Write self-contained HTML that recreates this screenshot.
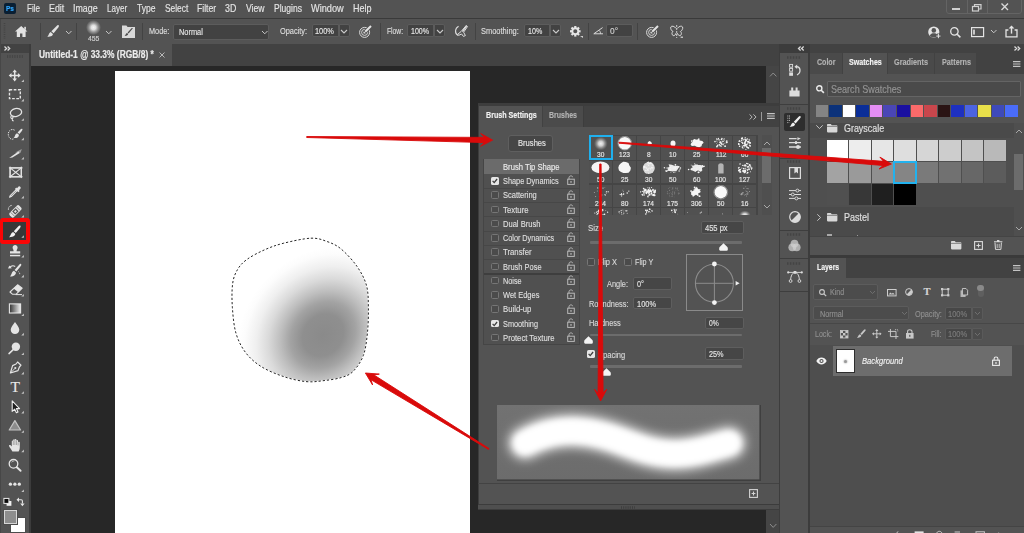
<!DOCTYPE html>
<html lang="en">
<head>
<meta charset="utf-8">
<title>Photoshop - Brush Settings</title>
<style>
html,body{margin:0;padding:0;}
body{width:1024px;height:533px;overflow:hidden;background:#535353;font-family:"Liberation Sans",sans-serif;}
#app{position:relative;width:1024px;height:533px;overflow:hidden;background:#535353;}
.r{position:absolute;box-sizing:border-box;display:block;}
.t{position:absolute;white-space:pre;transform-origin:0 0;display:block;-webkit-text-stroke:0.16px currentColor;}
svg{overflow:visible;}
</style>
</head>
<body>
<div id="app">
<!-- base layout -->
<div class="r" style="left:0px;top:0px;width:1024px;height:18px;background:#535353;"></div>
<div class="r" style="left:0px;top:18px;width:1024px;height:1px;background:#3a3a3a;"></div>
<div class="r" style="left:0px;top:19px;width:1024px;height:25px;background:#535353;"></div>
<div class="r" style="left:0px;top:44px;width:1024px;height:9px;background:#424242;"></div>
<div class="r" style="left:30px;top:44px;width:749px;height:22px;background:#424242;"></div>
<div class="r" style="left:31px;top:44px;width:141px;height:22px;background:#535353;"></div>
<div class="r" style="left:30px;top:66px;width:750px;height:467px;background:#272727;"></div>
<div class="r" style="left:115px;top:71px;width:355px;height:462px;background:#ffffff;"></div>
<div class="r" style="left:766px;top:66px;width:14px;height:467px;background:#454545;"></div>
<div class="r" style="left:0px;top:53px;width:29px;height:480px;background:#535353;"></div>
<div class="r" style="left:0px;top:19px;width:1px;height:514px;background:#474747;"></div>
<div class="r" style="left:29px;top:44px;width:2px;height:489px;background:#3c3c3c;"></div>
<div class="r" style="left:779px;top:44px;width:31px;height:489px;background:#3c3c3c;"></div>
<div class="r" style="left:780px;top:53px;width:28.2px;height:480px;background:#535353;"></div>
<div class="r" style="left:810px;top:53px;width:214px;height:480px;background:#535353;"></div>
<!-- menu bar -->
<div class="r" style="left:4px;top:3px;width:12px;height:11px;background:#0a1f33;border-radius:2px;"></div>
<span class="t" style="left:6.00px;top:4.73px;font-size:8px;line-height:8px;color:#31a8ff;transform:scaleX(0.8175);font-weight:700;">Ps</span>
<span class="t" style="left:26.50px;top:3.31px;font-size:10.5px;line-height:10.5px;color:#e4e4e4;transform:scaleX(0.7624);">File</span>
<span class="t" style="left:48.60px;top:3.31px;font-size:10.5px;line-height:10.5px;color:#e4e4e4;transform:scaleX(0.8456);">Edit</span>
<span class="t" style="left:72.90px;top:3.31px;font-size:10.5px;line-height:10.5px;color:#e4e4e4;transform:scaleX(0.8429);">Image</span>
<span class="t" style="left:106.80px;top:3.31px;font-size:10.5px;line-height:10.5px;color:#e4e4e4;transform:scaleX(0.7690);">Layer</span>
<span class="t" style="left:136.90px;top:3.31px;font-size:10.5px;line-height:10.5px;color:#e4e4e4;transform:scaleX(0.8127);">Type</span>
<span class="t" style="left:164.70px;top:3.31px;font-size:10.5px;line-height:10.5px;color:#e4e4e4;transform:scaleX(0.7984);">Select</span>
<span class="t" style="left:196.80px;top:3.31px;font-size:10.5px;line-height:10.5px;color:#e4e4e4;transform:scaleX(0.8228);">Filter</span>
<span class="t" style="left:225.00px;top:3.31px;font-size:10.5px;line-height:10.5px;color:#e4e4e4;transform:scaleX(0.8419);">3D</span>
<span class="t" style="left:245.50px;top:3.31px;font-size:10.5px;line-height:10.5px;color:#e4e4e4;transform:scaleX(0.8197);">View</span>
<span class="t" style="left:273.60px;top:3.31px;font-size:10.5px;line-height:10.5px;color:#e4e4e4;transform:scaleX(0.8101);">Plugins</span>
<span class="t" style="left:310.60px;top:3.31px;font-size:10.5px;line-height:10.5px;color:#e4e4e4;transform:scaleX(0.8756);">Window</span>
<span class="t" style="left:352.80px;top:3.31px;font-size:10.5px;line-height:10.5px;color:#e4e4e4;transform:scaleX(0.8567);">Help</span>
<div class="r" style="left:945.5px;top:-1px;width:76.4px;height:14.6px;background:#535353;border:1px solid #646464;border-radius:0 0 3px 3px;"></div>
<div class="r" style="left:966.5px;top:0px;width:1px;height:13px;background:#646464;"></div>
<div class="r" style="left:986.5px;top:0px;width:1px;height:13px;background:#646464;"></div>
<div class="r" style="left:952px;top:8px;width:7.6px;height:2.2px;background:#d0d0d0;"></div>
<svg class="r" style="left:972px;top:3.8px;" width="10" height="8" viewBox="0 0 10 8"><rect x="0.5" y="2.5" width="6" height="4.5" fill="none" stroke="#d0d0d0" stroke-width="1.2"/><path d="M2.5 2.5V0.6H9V5H6.5" fill="none" stroke="#d0d0d0" stroke-width="1.2"/></svg>
<svg class="r" style="left:1001px;top:3.2px;" width="8" height="8" viewBox="0 0 8 8"><path d="M0.5 0.5L7 7M7 0.5L0.5 7" fill="none" stroke="#d8d8d8" stroke-width="1.4"/></svg>
<!-- document tab -->
<span class="t" style="left:38.50px;top:50.03px;font-size:10px;line-height:10px;color:#ececec;transform:scaleX(0.8414);font-weight:700;">Untitled-1 @ 33.3% (RGB/8) *</span>
<svg class="r" style="left:158.5px;top:51.5px;" width="6" height="6" viewBox="0 0 6 6"><path d="M0.5 0.5L5.5 5.5M5.5 0.5L0.5 5.5" fill="none" stroke="#b8b8b8" stroke-width="1"/></svg>
<svg class="r" style="left:4px;top:46px;" width="7" height="5" viewBox="0 0 7 5"><path d="M0.5 0.5L2.6 2.5L0.5 4.5M3.6 0.5L5.7 2.5L3.6 4.5" fill="none" stroke="#dadada" stroke-width="1.3"/></svg>
<svg class="r" style="left:798px;top:46px;" width="7" height="5" viewBox="0 0 7 5"><path d="M2.6 0.5L0.5 2.5L2.6 4.5M5.7 0.5L3.6 2.5L5.7 4.5" fill="none" stroke="#dadada" stroke-width="1.3"/></svg>
<svg class="r" style="left:1013.6px;top:46.2px;" width="7" height="5" viewBox="0 0 7 5"><path d="M0.5 0.5L2.6 2.5L0.5 4.5M3.6 0.5L5.7 2.5L3.6 4.5" fill="none" stroke="#dadada" stroke-width="1.3"/></svg>
<!-- options bar -->
<svg class="r" style="left:3px;top:23px;" width="3" height="16" viewBox="0 0 3 16"><path d="M1.5 0V16" stroke="#444" stroke-width="1.6" stroke-dasharray="1 1.2"/></svg>
<svg class="r" style="left:15px;top:26px;" width="12.4" height="11" viewBox="0 0 12.4 11"><path d="M6.2 0L0 5.6H1.8V11H5V7.4H7.4V11H10.6V5.6H12.4Z" fill="#e2e2e2"/><rect x="9.3" y="0.8" width="1.6" height="3" fill="#e2e2e2"/></svg>
<div class="r" style="left:40px;top:23px;width:1px;height:16.5px;background:#434343;"></div>
<svg class="r" style="left:46.5px;top:25.2px;" width="12.0" height="12.0" viewBox="0 0 12 12"><path d="M11.6 0.2C12.2 0.8 11.9 1.6 11.3 2.4L6.6 8.2L4.4 6.2L9.6 0.9C10.3 0.2 11.1 -0.2 11.6 0.2Z" fill="#e2e2e2"/><path d="M3.7 6.9L5.9 8.9C5.9 10.4 4.6 11.7 0.3 11.8C1.8 10.6 1.5 8.0 3.7 6.9Z" fill="#e2e2e2"/></svg>
<svg class="r" style="left:65.5px;top:30.8px;" width="5.5" height="2.8" viewBox="0 0 5.5 2.8"><path d="M0 0L2.75 2.8L5.5 0" fill="none" stroke="#c8c8c8" stroke-width="1"/></svg>
<div class="r" style="left:76px;top:23px;width:1px;height:16.5px;background:#434343;"></div>
<div class="r" style="left:86px;top:19.5px;width:15px;height:15px;background:radial-gradient(circle closest-side,#f4f4f4 0%,#e0e0e0 30%,rgba(200,200,200,.55) 62%,rgba(83,83,83,0) 100%);border-radius:50%;"></div>
<span class="t" style="left:88.00px;top:34.85px;font-size:7.5px;line-height:7.5px;color:#cfcfcf;transform:scaleX(0.9110);">455</span>
<svg class="r" style="left:106px;top:31px;" width="5.5" height="2.8" viewBox="0 0 5.5 2.8"><path d="M0 0L2.75 2.8L5.5 0" fill="none" stroke="#c8c8c8" stroke-width="1"/></svg>
<svg class="r" style="left:121.5px;top:25px;" width="13" height="13" viewBox="0 0 13 13"><path d="M0 0.6H4.4L5.6 2H13V13H0Z" fill="#d9d9d9"/><path d="M10.7 3.6L6.6 8.4L5.6 7.5L9.8 3.1C10.3 2.7 11.1 3.1 10.7 3.6ZM5.1 8.1L6.1 9C6.1 10 5.2 10.9 2.6 11C3.6 10.2 3.6 8.7 5.1 8.1Z" fill="#4a4a4a"/></svg>
<div class="r" style="left:142px;top:23px;width:1px;height:16.5px;background:#434343;"></div>
<span class="t" style="left:148.70px;top:26.36px;font-size:9.5px;line-height:9.5px;color:#dcdcdc;transform:scaleX(0.7688);">Mode:</span>
<div class="r" style="left:173px;top:24px;width:96.39999999999998px;height:16px;background:#424242;border:1px solid #5c5c5c;border-radius:2px;"></div>
<span class="t" style="left:179.20px;top:26.56px;font-size:9.5px;line-height:9.5px;color:#e6e6e6;transform:scaleX(0.7774);">Normal</span>
<svg class="r" style="left:261.7px;top:31.2px;" width="5.5" height="2.8" viewBox="0 0 5.5 2.8"><path d="M0 0L2.75 2.8L5.5 0" fill="none" stroke="#c8c8c8" stroke-width="1"/></svg>
<span class="t" style="left:279.90px;top:26.16px;font-size:9.5px;line-height:9.5px;color:#dcdcdc;transform:scaleX(0.7777);">Opacity:</span>
<div class="r" style="left:311.6px;top:24px;width:27.19999999999999px;height:13px;background:#424242;border:1px solid #5c5c5c;border-radius:2px 0 0 2px;"></div>
<div class="r" style="left:338.8px;top:24px;width:11.199999999999989px;height:13px;background:#424242;border:1px solid #5c5c5c;border-radius:0 2px 2px 0;"></div>
<span class="t" style="left:315.00px;top:26.06px;font-size:9.5px;line-height:9.5px;color:#e6e6e6;transform:scaleX(0.7779);">100%</span>
<svg class="r" style="left:341.4px;top:30px;" width="6" height="3" viewBox="0 0 6 3"><path d="M0 0L3.0 3L6 0" fill="none" stroke="#cacaca" stroke-width="1.1"/></svg>
<svg class="r" style="left:359px;top:25px;" width="13" height="13" viewBox="0 0 13 13"><circle cx="5.6" cy="7.4" r="5" fill="none" stroke="#dcdcdc" stroke-width="1"/><circle cx="5.6" cy="7.4" r="3" fill="none" stroke="#dcdcdc" stroke-width="0.9"/><circle cx="5.6" cy="7.4" r="1.2" fill="#dcdcdc"/><path d="M5.8 7.2L12.2 0.8" stroke="#535353" stroke-width="3.6"/><path d="M6.2 6.8L12 1" stroke="#e4e4e4" stroke-width="2"/></svg>
<div class="r" style="left:380px;top:23px;width:1px;height:16.5px;background:#434343;"></div>
<span class="t" style="left:387.00px;top:26.16px;font-size:9.5px;line-height:9.5px;color:#dcdcdc;transform:scaleX(0.7093);">Flow:</span>
<div class="r" style="left:407px;top:24px;width:26.80000000000001px;height:13px;background:#424242;border:1px solid #5c5c5c;border-radius:2px 0 0 2px;"></div>
<div class="r" style="left:433.8px;top:24px;width:11.599999999999966px;height:13px;background:#424242;border:1px solid #5c5c5c;border-radius:0 2px 2px 0;"></div>
<span class="t" style="left:410.70px;top:26.06px;font-size:9.5px;line-height:9.5px;color:#e6e6e6;transform:scaleX(0.7449);">100%</span>
<svg class="r" style="left:436.6px;top:30px;" width="6" height="3" viewBox="0 0 6 3"><path d="M0 0L3.0 3L6 0" fill="none" stroke="#cacaca" stroke-width="1.1"/></svg>
<svg class="r" style="left:454px;top:25px;" width="14" height="13" viewBox="0 0 14 13"><path d="M4.6 1.2C1 3 0.2 8.6 4.2 10.6" fill="none" stroke="#dcdcdc" stroke-width="1.1"/><path d="M12.3 0.4L13.5 1.6L9.6 7.2L11.4 10.6L9.4 11.4L7.6 9L4.6 10.4L3.8 9.2L7 6.6Z" fill="none" stroke="#dcdcdc" stroke-width="1"/><path d="M12.6 0.9L8.4 6.6" stroke="#dcdcdc" stroke-width="1.5"/></svg>
<div class="r" style="left:475px;top:23px;width:1px;height:16.5px;background:#434343;"></div>
<span class="t" style="left:481.40px;top:26.16px;font-size:9.5px;line-height:9.5px;color:#dcdcdc;transform:scaleX(0.7865);">Smoothing:</span>
<div class="r" style="left:524px;top:24px;width:26.399999999999977px;height:13px;background:#424242;border:1px solid #5c5c5c;border-radius:2px 0 0 2px;"></div>
<div class="r" style="left:550.4px;top:24px;width:11.0px;height:13px;background:#424242;border:1px solid #5c5c5c;border-radius:0 2px 2px 0;"></div>
<span class="t" style="left:527.60px;top:26.06px;font-size:9.5px;line-height:9.5px;color:#e6e6e6;transform:scaleX(0.7468);">10%</span>
<svg class="r" style="left:552.9px;top:30px;" width="6" height="3" viewBox="0 0 6 3"><path d="M0 0L3.0 3L6 0" fill="none" stroke="#cacaca" stroke-width="1.1"/></svg>
<svg class="r" style="left:570px;top:26px;" width="10.6" height="10.6" viewBox="0 0 10.6 10.6"><g transform="translate(5.3 5.3)"><rect x="-1.1" y="-5.3" width="2.2" height="2.6" fill="#e6e6e6" transform="rotate(0)"/><rect x="-1.1" y="-5.3" width="2.2" height="2.6" fill="#e6e6e6" transform="rotate(45)"/><rect x="-1.1" y="-5.3" width="2.2" height="2.6" fill="#e6e6e6" transform="rotate(90)"/><rect x="-1.1" y="-5.3" width="2.2" height="2.6" fill="#e6e6e6" transform="rotate(135)"/><rect x="-1.1" y="-5.3" width="2.2" height="2.6" fill="#e6e6e6" transform="rotate(180)"/><rect x="-1.1" y="-5.3" width="2.2" height="2.6" fill="#e6e6e6" transform="rotate(225)"/><rect x="-1.1" y="-5.3" width="2.2" height="2.6" fill="#e6e6e6" transform="rotate(270)"/><rect x="-1.1" y="-5.3" width="2.2" height="2.6" fill="#e6e6e6" transform="rotate(315)"/><circle r="3" fill="none" stroke="#e6e6e6" stroke-width="1.9"/></g></svg>
<svg class="r" style="left:579.5px;top:36.3px;" width="3" height="2" viewBox="0 0 3 2"><path d="M0 0H3L3 2Z" fill="#d0d0d0"/></svg>
<div class="r" style="left:588px;top:23px;width:1px;height:16.5px;background:#434343;"></div>
<svg class="r" style="left:593.2px;top:26.8px;" width="10.4" height="7.4" viewBox="0 0 10.4 7.4"><path d="M9.6 0.6L0.8 6.8H10" fill="none" stroke="#d8d8d8" stroke-width="1"/><path d="M6.2 3.4C7.2 4.4 7.6 5.6 7.5 6.8" fill="none" stroke="#d8d8d8" stroke-width="0.9"/></svg>
<div class="r" style="left:606px;top:24px;width:27px;height:13px;background:#424242;border:1px solid #5c5c5c;border-radius:2px;"></div>
<span class="t" style="left:610.00px;top:26.06px;font-size:9.5px;line-height:9.5px;color:#d2d2d2;transform:scaleX(0.8808);">0°</span>
<div class="r" style="left:637px;top:23px;width:1px;height:16.5px;background:#434343;"></div>
<svg class="r" style="left:645.5px;top:25px;" width="13" height="13" viewBox="0 0 13 13"><circle cx="5.6" cy="7.4" r="5" fill="none" stroke="#dcdcdc" stroke-width="1"/><circle cx="5.6" cy="7.4" r="3" fill="none" stroke="#dcdcdc" stroke-width="0.9"/><circle cx="5.6" cy="7.4" r="1.2" fill="#dcdcdc"/><path d="M5.8 7.2L12.2 0.8" stroke="#535353" stroke-width="3.6"/><path d="M6.2 6.8L12 1" stroke="#e4e4e4" stroke-width="2"/></svg>
<svg class="r" style="left:670px;top:25px;" width="13.4" height="13.4" viewBox="0 0 13.4 13.4"><path d="M6 3.4C4.6 1 1.4 0.6 0.8 2C0.2 3.6 1.6 6 3 6.6C1.6 7.4 1.6 10 3.2 10.6C4.6 11 5.8 9.4 6 8.2" fill="none" stroke="#dadada" stroke-width="1"/><path d="M7.4 3.4C8.8 1 12 0.6 12.6 2C13.2 3.6 11.8 6 10.4 6.6C11.8 7.4 11.8 10 10.2 10.6C8.8 11 7.6 9.4 7.4 8.2" fill="none" stroke="#dadada" stroke-width="1"/><path d="M6.7 0V13" stroke="#dadada" stroke-width="0.9" stroke-dasharray="2 1"/><rect x="10.6" y="11.6" width="2.4" height="1.2" fill="#dadada"/></svg>
<svg class="r" style="left:928px;top:25.6px;" width="13" height="12.4" viewBox="0 0 13 12.4"><circle cx="5.8" cy="6" r="5.6" fill="#e4e4e4"/><circle cx="5.8" cy="4.4" r="2.3" fill="#535353"/><path d="M1.8 10C2.4 7.6 4 7.2 5.8 7.2C7.6 7.2 9.2 7.6 9.8 10C8 11.8 3.6 11.8 1.8 10Z" fill="#535353"/><path d="M10.4 7.6V12.4M8 10H12.8" stroke="#535353" stroke-width="2.6"/><path d="M10.4 8V12.2M8.3 10.1H12.5" stroke="#e4e4e4" stroke-width="1"/></svg>
<svg class="r" style="left:950px;top:26.5px;" width="11" height="11" viewBox="0 0 11 11"><circle cx="4.4" cy="4.4" r="3.7" fill="none" stroke="#e4e4e4" stroke-width="1.3"/><path d="M7.2 7.2L10.4 10.4" stroke="#e4e4e4" stroke-width="1.5"/></svg>
<svg class="r" style="left:970.7px;top:26.7px;" width="13.2" height="10.2" viewBox="0 0 13.2 10.2"><rect x="0.6" y="0.6" width="12" height="9" fill="none" stroke="#e4e4e4" stroke-width="1.2"/><rect x="2.2" y="2.6" width="1.6" height="5" fill="#e4e4e4"/></svg>
<svg class="r" style="left:990.8px;top:30px;" width="5.5" height="2.8" viewBox="0 0 5.5 2.8"><path d="M0 0L2.75 2.8L5.5 0" fill="none" stroke="#c8c8c8" stroke-width="1"/></svg>
<svg class="r" style="left:1005px;top:25px;" width="13" height="12.4" viewBox="0 0 13 12.4"><path d="M3.4 5H1V11.8H12V5H9.6" fill="none" stroke="#e4e4e4" stroke-width="1.3"/><path d="M6.5 8.6V1.6" stroke="#e4e4e4" stroke-width="1.4"/><path d="M3.6 3.4L6.5 0.4L9.4 3.4Z" fill="#e4e4e4"/></svg>
<!-- left toolbar -->
<svg class="r" style="left:6.8px;top:55.4px;" width="16" height="3" viewBox="0 0 16 3"><path d="M0 1.5H16" stroke="#464646" stroke-width="2.8" stroke-dasharray="1.2 1.25"/></svg>
<div class="r" style="left:0px;top:217.6px;width:30.3px;height:26.7px;background:#383838;border:4.1px solid #fb0505;border-left-width:3.9px;border-radius:3px;"></div>
<svg class="r" style="left:0;top:0" width="32" height="533" viewBox="0 0 32 533"><defs><linearGradient id="tg" x1="0" x2="1" y1="0" y2="0"><stop offset="0" stop-color="#303030"/><stop offset="1" stop-color="#f0f0f0"/></linearGradient></defs><path d="M14.7 71V80M10.2 75.4H19.2" stroke="#e4e4e4" stroke-width="1.5"/><path d="M14.7 69.4L17 72.2H12.4ZM14.7 81.4L12.4 78.6H17ZM8.7 75.4L11.5 73.1V77.7ZM20.7 75.4L17.9 77.7V73.1Z" fill="#e4e4e4"/><path d="M23.9 79.4V82.0H21.3Z" fill="#c6c6c6"/><rect x="9.5" y="89.7" width="10.8" height="8.9" fill="none" stroke="#e4e4e4" stroke-width="1.4" stroke-dasharray="2.7 1.5"/><path d="M23.9 98.8V101.4H21.3Z" fill="#c6c6c6"/><ellipse cx="16" cy="112.5" rx="5.7" ry="4" fill="none" stroke="#e4e4e4" stroke-width="1.3" transform="rotate(-12 16 112.5)"/><path d="M11.4 116C10.4 117 10.8 118.6 12 118.6C13.2 118.6 13.4 117 12.2 116.8M12 118.6C12 119.8 12.6 120.8 13.6 121" fill="none" stroke="#e4e4e4" stroke-width="1.1"/><path d="M23.9 118.2V120.8H21.3Z" fill="#c6c6c6"/><path d="M14.6 130.2C11 128 7.6 131.4 8.4 135.4C9.2 139.2 12.4 140 14 138.6" fill="none" stroke="#e4e4e4" stroke-width="1" stroke-dasharray="1.3 1"/><path d="M22.2 128.8C22.8 129.4 22.4 130.2 21.8 131L19.4 134L17.6 132.6L20.4 129.4C21 128.8 21.7 128.4 22.2 128.8Z" fill="#e4e4e4"/><path d="M17 133.2L18.9 134.7C19.2 136.8 17 138.6 13.6 138C15.2 136.8 14.8 134 17 133.2Z" fill="#e4e4e4"/><path d="M23.9 137.6V140.2H21.3Z" fill="#c6c6c6"/><path d="M15.2 152.4L21.8 149L20.6 152.8Z" fill="#9c9c9c"/><path d="M9.2 158L18.4 151.4L19.8 153L12.4 157.6Z" fill="#e4e4e4"/><path d="M23.9 157.0V159.6H21.3Z" fill="#c6c6c6"/><rect x="10.1" y="167.9" width="11.2" height="8.9" fill="none" stroke="#e4e4e4" stroke-width="1.3"/><path d="M10.1 167.9L21.3 176.8M21.3 167.9L10.1 176.8" stroke="#e4e4e4" stroke-width="1.1"/><path d="M8.9 167.9H22.6M8.9 176.8H22.6M10.1 166.6V178.1M21.3 166.6V178.1" stroke="#e4e4e4" stroke-width="1"/><path d="M18.6 186.6C19.6 185.8 21.2 187.2 20.6 188.4L19 190.2L19.7 190.9L18.3 192.3L14.9 188.9L16.3 187.5L17 188.2Z" fill="#e4e4e4"/><path d="M15.7 190.2L10.2 195.6L9.6 197.2L11.2 196.6L16.7 191.2Z" fill="none" stroke="#e4e4e4" stroke-width="1.1" stroke-linejoin="round"/><path d="M23.9 195.8V198.4H21.3Z" fill="#c6c6c6"/><path d="M11.6 205.4C9 205.8 7.8 208.2 8.6 210.8" fill="none" stroke="#e4e4e4" stroke-width="1" stroke-dasharray="1.3 1"/><g transform="rotate(-45 15.4 211.4)"><rect x="8.6" y="208.4" width="13.6" height="6" rx="1.8" fill="#e4e4e4"/><rect x="13" y="209.3" width="4.8" height="4.2" fill="#535353"/><rect x="14.3" y="210.4" width="2.2" height="2" fill="#e4e4e4"/><path d="M11.4 208.6V214.2M19.4 208.6V214.2" stroke="#535353" stroke-width="0.6"/></g><path d="M23.9 215.0V217.6H21.3Z" fill="#c6c6c6"/><path d="M20.2 225.6C20.9 226.2 20.6 227.1 20 227.9L15.8 233L13.8 231.3L18.4 226.3C19 225.6 19.7 225.2 20.2 225.6Z" fill="#f2f2f2"/><path d="M13.1 232L15.2 233.8C15.3 235.6 13.6 237.3 9 237.2C10.8 236 10.6 233 13.1 232Z" fill="#f2f2f2"/><path d="M23.9 235.2V237.8H21.3Z" fill="#bdbdbd"/><path d="M12.6 247.6C12.6 244.2 17.6 244.2 17.6 247.6C17.6 249 16.6 249.6 16.6 251.2H20.2V253.6H10V251.2H13.6C13.6 249.6 12.6 249 12.6 247.6Z" fill="#e4e4e4"/><rect x="10" y="254.8" width="10.2" height="1.5" fill="#e4e4e4"/><path d="M23.9 255.0V257.6H21.3Z" fill="#c6c6c6"/><path d="M21 263.9C21.6 264.5 21.3 265.3 20.8 266L16.4 271.6L14.6 270.1L19.4 264.6C19.9 264 20.5 263.5 21 263.9Z" fill="#e4e4e4"/><path d="M14 270.8L15.9 272.4C16 274.2 14.4 276.4 10 276.4C11.8 275 11.4 271.8 14 270.8Z" fill="#e4e4e4"/><path d="M9.6 267.6C11 265.8 13.6 265.6 15.2 266.4" fill="none" stroke="#e4e4e4" stroke-width="1.1"/><path d="M8 268.6L9.4 265.4L11.8 268.2Z" fill="#e4e4e4"/><path d="M18.4 271.6C19.8 272.4 20 273.8 19.4 275" fill="none" stroke="#e4e4e4" stroke-width="0.9" stroke-dasharray="1 1"/><path d="M23.9 274.8V277.4H21.3Z" fill="#c6c6c6"/><path d="M17.6 284.8L22.2 288.2L16.2 294.2H12.4L10 292Z" fill="none" stroke="#e4e4e4" stroke-width="1.1" stroke-linejoin="round"/><path d="M17.6 284.8L22.2 288.2L18.2 292.2L13.6 288.6Z" fill="#e4e4e4"/><path d="M15.6 294.6H22" stroke="#e4e4e4" stroke-width="1"/><path d="M23.9 294.0V296.6H21.3Z" fill="#c6c6c6"/><rect x="9.4" y="303.9" width="11.2" height="9.1" fill="url(#tg)" stroke="#e6e6e6" stroke-width="1.1"/><path d="M23.9 313.4V316.0H21.3Z" fill="#c6c6c6"/><path d="M15 322C16.8 325 19.3 327.2 19.3 329.8C19.3 335.4 10.7 335.4 10.7 329.8C10.7 327.2 13.2 325 15 322Z" fill="#e4e4e4"/><path d="M23.9 332.8V335.4H21.3Z" fill="#c6c6c6"/><circle cx="15.9" cy="346.8" r="4.2" fill="#e4e4e4"/><path d="M13.2 349.6L9 353.6" stroke="#e4e4e4" stroke-width="1.5" stroke-linecap="round"/><path d="M23.9 352.4V355.0H21.3Z" fill="#c6c6c6"/><path d="M17.6 362L21 365.2L19.4 367L18 370.6L10.4 373L12.6 365.6L16 364Z" fill="none" stroke="#e4e4e4" stroke-width="1.2" stroke-linejoin="round"/><path d="M10.8 372.6L14.8 368.6" stroke="#e4e4e4" stroke-width="0.9"/><circle cx="15.3" cy="368" r="1.1" fill="#e4e4e4"/><path d="M23.9 371.8V374.4H21.3Z" fill="#c6c6c6"/><path d="M23.9 391.2V393.8H21.3Z" fill="#c6c6c6"/><path d="M12.2 400.8V411.4L14.7 409.2L16.4 412.8L18 412L16.4 408.6H19.6Z" fill="#1e1e1e" stroke="#ececec" stroke-width="1.1" stroke-linejoin="round"/><path d="M23.9 410.8V413.4H21.3Z" fill="#c6c6c6"/><path d="M14.9 420.6L20.6 430H9.2Z" fill="#8c8c8c" stroke="#c4c4c4" stroke-width="1.2" stroke-linejoin="round"/><path d="M23.9 430.2V432.8H21.3Z" fill="#c6c6c6"/><path d="M12.4 451.4C11.4 449.6 9.6 447.6 9 446C8.8 445 10 444.6 10.8 445.4L11.8 446.6V441.2C11.8 440.2 13.2 440.2 13.2 441.2V440C13.2 439 14.8 439 14.8 440V439.8C14.8 438.8 16.4 438.8 16.4 439.8V440.6C16.4 439.8 18 439.8 18 440.8V442.4C18.2 441.6 19.8 441.6 19.8 442.8V447C19.8 448.8 19.4 450.2 18.6 451.4Z" fill="#e4e4e4"/><path d="M13.3 441V445M14.9 440V445M16.5 440.6V445M18.1 442.4V445.4" stroke="#606060" stroke-width="0.45"/><path d="M23.9 449.6V452.2H21.3Z" fill="#c6c6c6"/><circle cx="13.5" cy="463.8" r="4.3" fill="none" stroke="#e4e4e4" stroke-width="1.3"/><path d="M16.8 467.2L20.6 470.8" stroke="#e4e4e4" stroke-width="1.9" stroke-linecap="round"/><path d="M11.4 462.4C12 461.4 13.2 461 14.2 461.2" fill="none" stroke="#e4e4e4" stroke-width="0.7"/><circle cx="10.4" cy="484.2" r="1.65" fill="#e4e4e4"/><circle cx="14.9" cy="484.2" r="1.65" fill="#e4e4e4"/><circle cx="19.3" cy="484.2" r="1.65" fill="#e4e4e4"/><path d="M23.9 489.4V492.0H21.3Z" fill="#c6c6c6"/><rect x="6.6" y="501" width="4.8" height="4.8" fill="#f0f0f0"/><rect x="3.9" y="498.4" width="5" height="5" fill="#0c0c0c" stroke="#ececec" stroke-width="1"/><path d="M18.6 499.8H21.2C22 499.8 22.4 500.2 22.4 501V503.6" fill="none" stroke="#e6e6e6" stroke-width="1.1"/><path d="M16.5 499.8L19 497.6V502ZM22.4 506.2L20.2 503.6H24.6Z" fill="#e6e6e6"/></svg>
<span class="t" style="left:10.6px;top:378.6px;font:400 15.5px/16px 'Liberation Serif',serif;color:#e8e8e8;">T</span>
<div class="r" style="left:11px;top:517.5px;width:14.4px;height:14.2px;background:#ffffff;box-shadow:0 0 0 1px #4c4c4c;"></div>
<div class="r" style="left:3.7px;top:510.1px;width:13.4px;height:14.1px;background:#8d8d8d;border:1px solid #d6d6d6;box-shadow:0 0 0 1px #4c4c4c;"></div>
<!-- canvas artwork: soft brush dab inside a lasso selection -->
<svg class="r" style="left:115px;top:71px" width="355" height="462" viewBox="115 71 355 462">
<defs>
<clipPath id="sel"><path d="M310.8 238.2C318.0 237.9 322.0 239.7 327.0 241.5C332.0 243.3 336.0 244.8 341.0 248.9C346.0 253.1 352.8 260.3 357.0 266.4C361.2 272.5 364.6 278.6 366.5 285.5C368.4 292.4 368.2 299.8 368.4 307.8C368.5 315.8 368.2 325.3 367.4 333.3C366.5 341.3 365.7 349.2 363.3 355.6C360.9 362.0 356.7 367.8 353.0 371.5C349.3 375.2 345.8 376.1 341.0 377.6C336.2 379.1 329.8 379.9 324.0 380.6C318.2 381.3 312.7 382.3 306.0 381.6C299.3 380.9 291.1 379.1 283.7 376.6C276.3 374.1 267.8 370.7 261.4 366.7C255.0 362.7 249.7 358.0 245.5 352.4C241.3 346.8 238.2 340.7 236.0 333.3C233.8 325.9 233.0 316.0 232.4 307.8C231.8 299.6 231.8 290.4 232.6 284.0C233.4 277.6 235.1 273.7 237.5 269.6C239.9 265.5 242.5 262.7 247.0 259.4C251.5 256.1 258.5 252.5 264.6 249.8C270.7 247.1 276.0 245.1 283.7 243.2C291.4 241.3 303.6 238.5 310.8 238.2Z"/></clipPath>
<radialGradient id="dab" cx="0.5" cy="0.5" r="0.5"><stop offset="0" stop-color="#8a8a8a"/><stop offset="0.24" stop-color="#8f8f8f"/><stop offset="0.38" stop-color="#a3a3a3"/><stop offset="0.5" stop-color="#bebebe"/><stop offset="0.64" stop-color="#dadada"/><stop offset="0.78" stop-color="#efefef"/><stop offset="0.92" stop-color="#fcfcfc"/><stop offset="1" stop-color="#ffffff"/></radialGradient>
</defs>
<g clip-path="url(#sel)"><ellipse cx="323" cy="335" rx="80" ry="93" fill="url(#dab)" transform="rotate(40 323 335)"/></g>
<path d="M310.8 238.2C318.0 237.9 322.0 239.7 327.0 241.5C332.0 243.3 336.0 244.8 341.0 248.9C346.0 253.1 352.8 260.3 357.0 266.4C361.2 272.5 364.6 278.6 366.5 285.5C368.4 292.4 368.2 299.8 368.4 307.8C368.5 315.8 368.2 325.3 367.4 333.3C366.5 341.3 365.7 349.2 363.3 355.6C360.9 362.0 356.7 367.8 353.0 371.5C349.3 375.2 345.8 376.1 341.0 377.6C336.2 379.1 329.8 379.9 324.0 380.6C318.2 381.3 312.7 382.3 306.0 381.6C299.3 380.9 291.1 379.1 283.7 376.6C276.3 374.1 267.8 370.7 261.4 366.7C255.0 362.7 249.7 358.0 245.5 352.4C241.3 346.8 238.2 340.7 236.0 333.3C233.8 325.9 233.0 316.0 232.4 307.8C231.8 299.6 231.8 290.4 232.6 284.0C233.4 277.6 235.1 273.7 237.5 269.6C239.9 265.5 242.5 262.7 247.0 259.4C251.5 256.1 258.5 252.5 264.6 249.8C270.7 247.1 276.0 245.1 283.7 243.2C291.4 241.3 303.6 238.5 310.8 238.2Z" fill="none" stroke="#ffffff" stroke-width="1"/>
<path d="M310.8 238.2C318.0 237.9 322.0 239.7 327.0 241.5C332.0 243.3 336.0 244.8 341.0 248.9C346.0 253.1 352.8 260.3 357.0 266.4C361.2 272.5 364.6 278.6 366.5 285.5C368.4 292.4 368.2 299.8 368.4 307.8C368.5 315.8 368.2 325.3 367.4 333.3C366.5 341.3 365.7 349.2 363.3 355.6C360.9 362.0 356.7 367.8 353.0 371.5C349.3 375.2 345.8 376.1 341.0 377.6C336.2 379.1 329.8 379.9 324.0 380.6C318.2 381.3 312.7 382.3 306.0 381.6C299.3 380.9 291.1 379.1 283.7 376.6C276.3 374.1 267.8 370.7 261.4 366.7C255.0 362.7 249.7 358.0 245.5 352.4C241.3 346.8 238.2 340.7 236.0 333.3C233.8 325.9 233.0 316.0 232.4 307.8C231.8 299.6 231.8 290.4 232.6 284.0C233.4 277.6 235.1 273.7 237.5 269.6C239.9 265.5 242.5 262.7 247.0 259.4C251.5 256.1 258.5 252.5 264.6 249.8C270.7 247.1 276.0 245.1 283.7 243.2C291.4 241.3 303.6 238.5 310.8 238.2Z" fill="none" stroke="#262626" stroke-width="1" stroke-dasharray="2.2 2"/>
</svg>
<!-- brush settings panel -->
<div class="r" style="left:478px;top:103px;width:302px;height:407px;background:#3d3d3d;"></div>
<div class="r" style="left:479px;top:106px;width:300px;height:21px;background:#424242;"></div>
<div class="r" style="left:479px;top:127px;width:300px;height:377px;background:#535353;"></div>
<div class="r" style="left:479px;top:106px;width:63.4px;height:22px;background:#535353;"></div>
<div class="r" style="left:543px;top:106px;width:40px;height:20.5px;background:#4b4b4b;"></div>
<div class="r" style="left:583px;top:106px;width:1px;height:20.5px;background:#3d3d3d;"></div>
<span class="t" style="left:485.60px;top:109.86px;font-size:9.5px;line-height:9.5px;color:#f2f2f2;transform:scaleX(0.7504);font-weight:700;">Brush Settings</span>
<span class="t" style="left:549.00px;top:109.86px;font-size:9.5px;line-height:9.5px;color:#b4b4b4;transform:scaleX(0.7366);font-weight:700;">Brushes</span>
<svg class="r" style="left:749px;top:113.5px;" width="8" height="6" viewBox="0 0 8 6"><path d="M0.5 0.4L3.2 3L0.5 5.6M4.4 0.4L7.1 3L4.4 5.6" fill="none" stroke="#b8b8b8" stroke-width="1"/></svg>
<div class="r" style="left:761px;top:112px;width:1px;height:9px;background:#9a9a9a;"></div>
<svg class="r" style="left:767.2px;top:113px;" width="7.8" height="6" viewBox="0 0 7.8 6"><path d="M0 0.7H7.8M0 3H7.8M0 5.3H7.8" stroke="#c4c4c4" stroke-width="1.2"/></svg>
<div class="r" style="left:508.4px;top:134.5px;width:44.8px;height:17px;background:#464646;border:1px solid #5f5f5f;border-radius:3px;"></div>
<span class="t" style="left:517.50px;top:138.46px;font-size:9.5px;line-height:9.5px;color:#e4e4e4;transform:scaleX(0.8005);">Brushes</span>
<div class="r" style="left:483px;top:158.6px;width:96.6px;height:186px;background:#505050;border:1px solid #454545;"></div>
<div class="r" style="left:484px;top:159.2px;width:95px;height:14.4px;background:#6b6b6b;"></div>
<span class="t" style="left:503.40px;top:161.56px;font-size:9.5px;line-height:9.5px;color:#eaeaea;transform:scaleX(0.8058);">Brush Tip Shape</span>
<div class="r" style="left:491.2px;top:177.0px;width:7.6px;height:7.6px;background:#e6e6e6;border-radius:1.6px;"></div>
<svg class="r" style="left:491.2px;top:177.0px;" width="7.6" height="7.6" viewBox="0 0 7.6 7.6"><path d="M1.6 3.9L3.2 5.6L6.1 2" fill="none" stroke="#3c3c3c" stroke-width="1.3"/></svg>
<span class="t" style="left:502.60px;top:176.06px;font-size:9.5px;line-height:9.5px;color:#dedede;transform:scaleX(0.7742);">Shape Dynamics</span>
<svg class="r" style="left:566.8px;top:175.4px;" width="8" height="10" viewBox="0 0 8 10"><rect x="0.7" y="4.2" width="6.6" height="5.2" fill="none" stroke="#b8b8b8" stroke-width="1"/><path d="M2 4.2V2.6C2 0.4 5.6 0.4 5.6 2.2" fill="none" stroke="#b8b8b8" stroke-width="1"/><rect x="3.4" y="6" width="1.2" height="1.8" fill="#b8b8b8"/></svg>
<div class="r" style="left:484px;top:187.75px;width:95px;height:1px;background:#474747;"></div>
<div class="r" style="left:491.2px;top:191.25px;width:7.6px;height:7.6px;background:#4b4b4b;border:1px solid #767676;border-radius:1.6px;"></div>
<span class="t" style="left:502.60px;top:190.31px;font-size:9.5px;line-height:9.5px;color:#dedede;transform:scaleX(0.7902);">Scattering</span>
<svg class="r" style="left:566.8px;top:189.65px;" width="8" height="10" viewBox="0 0 8 10"><rect x="0.7" y="4.2" width="6.6" height="5.2" fill="none" stroke="#b8b8b8" stroke-width="1"/><path d="M2 4.2V2.6C2 0.4 5.6 0.4 5.6 2.2" fill="none" stroke="#b8b8b8" stroke-width="1"/><rect x="3.4" y="6" width="1.2" height="1.8" fill="#b8b8b8"/></svg>
<div class="r" style="left:484px;top:202.0px;width:95px;height:1px;background:#474747;"></div>
<div class="r" style="left:491.2px;top:205.5px;width:7.6px;height:7.6px;background:#4b4b4b;border:1px solid #767676;border-radius:1.6px;"></div>
<span class="t" style="left:502.60px;top:204.56px;font-size:9.5px;line-height:9.5px;color:#dedede;transform:scaleX(0.8217);">Texture</span>
<svg class="r" style="left:566.8px;top:203.9px;" width="8" height="10" viewBox="0 0 8 10"><rect x="0.7" y="4.2" width="6.6" height="5.2" fill="none" stroke="#b8b8b8" stroke-width="1"/><path d="M2 4.2V2.6C2 0.4 5.6 0.4 5.6 2.2" fill="none" stroke="#b8b8b8" stroke-width="1"/><rect x="3.4" y="6" width="1.2" height="1.8" fill="#b8b8b8"/></svg>
<div class="r" style="left:484px;top:216.25px;width:95px;height:1px;background:#474747;"></div>
<div class="r" style="left:491.2px;top:219.75px;width:7.6px;height:7.6px;background:#4b4b4b;border:1px solid #767676;border-radius:1.6px;"></div>
<span class="t" style="left:502.60px;top:218.81px;font-size:9.5px;line-height:9.5px;color:#dedede;transform:scaleX(0.7958);">Dual Brush</span>
<svg class="r" style="left:566.8px;top:218.15px;" width="8" height="10" viewBox="0 0 8 10"><rect x="0.7" y="4.2" width="6.6" height="5.2" fill="none" stroke="#b8b8b8" stroke-width="1"/><path d="M2 4.2V2.6C2 0.4 5.6 0.4 5.6 2.2" fill="none" stroke="#b8b8b8" stroke-width="1"/><rect x="3.4" y="6" width="1.2" height="1.8" fill="#b8b8b8"/></svg>
<div class="r" style="left:484px;top:230.5px;width:95px;height:1px;background:#474747;"></div>
<div class="r" style="left:491.2px;top:234.0px;width:7.6px;height:7.6px;background:#4b4b4b;border:1px solid #767676;border-radius:1.6px;"></div>
<span class="t" style="left:502.60px;top:233.06px;font-size:9.5px;line-height:9.5px;color:#dedede;transform:scaleX(0.7637);">Color Dynamics</span>
<svg class="r" style="left:566.8px;top:232.4px;" width="8" height="10" viewBox="0 0 8 10"><rect x="0.7" y="4.2" width="6.6" height="5.2" fill="none" stroke="#b8b8b8" stroke-width="1"/><path d="M2 4.2V2.6C2 0.4 5.6 0.4 5.6 2.2" fill="none" stroke="#b8b8b8" stroke-width="1"/><rect x="3.4" y="6" width="1.2" height="1.8" fill="#b8b8b8"/></svg>
<div class="r" style="left:484px;top:244.75px;width:95px;height:1px;background:#474747;"></div>
<div class="r" style="left:491.2px;top:248.25px;width:7.6px;height:7.6px;background:#4b4b4b;border:1px solid #767676;border-radius:1.6px;"></div>
<span class="t" style="left:502.60px;top:247.31px;font-size:9.5px;line-height:9.5px;color:#dedede;transform:scaleX(0.8167);">Transfer</span>
<svg class="r" style="left:566.8px;top:246.65px;" width="8" height="10" viewBox="0 0 8 10"><rect x="0.7" y="4.2" width="6.6" height="5.2" fill="none" stroke="#b8b8b8" stroke-width="1"/><path d="M2 4.2V2.6C2 0.4 5.6 0.4 5.6 2.2" fill="none" stroke="#b8b8b8" stroke-width="1"/><rect x="3.4" y="6" width="1.2" height="1.8" fill="#b8b8b8"/></svg>
<div class="r" style="left:484px;top:259.0px;width:95px;height:1px;background:#474747;"></div>
<div class="r" style="left:491.2px;top:262.5px;width:7.6px;height:7.6px;background:#4b4b4b;border:1px solid #767676;border-radius:1.6px;"></div>
<span class="t" style="left:502.60px;top:261.56px;font-size:9.5px;line-height:9.5px;color:#dedede;transform:scaleX(0.7860);">Brush Pose</span>
<svg class="r" style="left:566.8px;top:260.90000000000003px;" width="8" height="10" viewBox="0 0 8 10"><rect x="0.7" y="4.2" width="6.6" height="5.2" fill="none" stroke="#b8b8b8" stroke-width="1"/><path d="M2 4.2V2.6C2 0.4 5.6 0.4 5.6 2.2" fill="none" stroke="#b8b8b8" stroke-width="1"/><rect x="3.4" y="6" width="1.2" height="1.8" fill="#b8b8b8"/></svg>
<div class="r" style="left:491.2px;top:276.75px;width:7.6px;height:7.6px;background:#4b4b4b;border:1px solid #767676;border-radius:1.6px;"></div>
<span class="t" style="left:502.60px;top:275.81px;font-size:9.5px;line-height:9.5px;color:#dedede;transform:scaleX(0.7658);">Noise</span>
<svg class="r" style="left:566.8px;top:275.15000000000003px;" width="8" height="10" viewBox="0 0 8 10"><rect x="0.7" y="4.2" width="6.6" height="5.2" fill="none" stroke="#b8b8b8" stroke-width="1"/><path d="M2 4.2V2.6C2 0.4 5.6 0.4 5.6 2.2" fill="none" stroke="#b8b8b8" stroke-width="1"/><rect x="3.4" y="6" width="1.2" height="1.8" fill="#b8b8b8"/></svg>
<div class="r" style="left:491.2px;top:291.0px;width:7.6px;height:7.6px;background:#4b4b4b;border:1px solid #767676;border-radius:1.6px;"></div>
<span class="t" style="left:502.60px;top:290.06px;font-size:9.5px;line-height:9.5px;color:#dedede;transform:scaleX(0.7863);">Wet Edges</span>
<svg class="r" style="left:566.8px;top:289.40000000000003px;" width="8" height="10" viewBox="0 0 8 10"><rect x="0.7" y="4.2" width="6.6" height="5.2" fill="none" stroke="#b8b8b8" stroke-width="1"/><path d="M2 4.2V2.6C2 0.4 5.6 0.4 5.6 2.2" fill="none" stroke="#b8b8b8" stroke-width="1"/><rect x="3.4" y="6" width="1.2" height="1.8" fill="#b8b8b8"/></svg>
<div class="r" style="left:491.2px;top:305.25px;width:7.6px;height:7.6px;background:#4b4b4b;border:1px solid #767676;border-radius:1.6px;"></div>
<span class="t" style="left:502.60px;top:304.31px;font-size:9.5px;line-height:9.5px;color:#dedede;transform:scaleX(0.8148);">Build-up</span>
<svg class="r" style="left:566.8px;top:303.65000000000003px;" width="8" height="10" viewBox="0 0 8 10"><rect x="0.7" y="4.2" width="6.6" height="5.2" fill="none" stroke="#b8b8b8" stroke-width="1"/><path d="M2 4.2V2.6C2 0.4 5.6 0.4 5.6 2.2" fill="none" stroke="#b8b8b8" stroke-width="1"/><rect x="3.4" y="6" width="1.2" height="1.8" fill="#b8b8b8"/></svg>
<div class="r" style="left:491.2px;top:319.5px;width:7.6px;height:7.6px;background:#e6e6e6;border-radius:1.6px;"></div>
<svg class="r" style="left:491.2px;top:319.5px;" width="7.6" height="7.6" viewBox="0 0 7.6 7.6"><path d="M1.6 3.9L3.2 5.6L6.1 2" fill="none" stroke="#3c3c3c" stroke-width="1.3"/></svg>
<span class="t" style="left:502.60px;top:318.56px;font-size:9.5px;line-height:9.5px;color:#dedede;transform:scaleX(0.7706);">Smoothing</span>
<svg class="r" style="left:566.8px;top:317.90000000000003px;" width="8" height="10" viewBox="0 0 8 10"><rect x="0.7" y="4.2" width="6.6" height="5.2" fill="none" stroke="#b8b8b8" stroke-width="1"/><path d="M2 4.2V2.6C2 0.4 5.6 0.4 5.6 2.2" fill="none" stroke="#b8b8b8" stroke-width="1"/><rect x="3.4" y="6" width="1.2" height="1.8" fill="#b8b8b8"/></svg>
<div class="r" style="left:491.2px;top:333.75px;width:7.6px;height:7.6px;background:#4b4b4b;border:1px solid #767676;border-radius:1.6px;"></div>
<span class="t" style="left:502.60px;top:332.81px;font-size:9.5px;line-height:9.5px;color:#dedede;transform:scaleX(0.8098);">Protect Texture</span>
<svg class="r" style="left:566.8px;top:332.15000000000003px;" width="8" height="10" viewBox="0 0 8 10"><rect x="0.7" y="4.2" width="6.6" height="5.2" fill="none" stroke="#b8b8b8" stroke-width="1"/><path d="M2 4.2V2.6C2 0.4 5.6 0.4 5.6 2.2" fill="none" stroke="#b8b8b8" stroke-width="1"/><rect x="3.4" y="6" width="1.2" height="1.8" fill="#b8b8b8"/></svg>
<div class="r" style="left:484px;top:273.4px;width:95px;height:1.2px;background:#3e3e3e;"></div>
<!-- brush tip grid -->
<div class="r" style="left:588.5px;top:134.79999999999998px;width:169.6px;height:80.4px;background:#454545;"></div>
<svg class="r" style="left:0;top:0" width="0" height="0"><defs><radialGradient id="softw"><stop offset="0" stop-color="#f2f2f2"/><stop offset="0.35" stop-color="#dcdcdc" stop-opacity=".9"/><stop offset="0.7" stop-color="#b0b0b0" stop-opacity=".45"/><stop offset="1" stop-color="#808080" stop-opacity="0"/></radialGradient></defs></svg>
<div class="r" style="left:589.3px;top:135.6px;width:23px;height:24px;background:#515151;"></div>
<svg class="r" style="left:589.3px;top:135.6px;overflow:hidden" width="23" height="24" viewBox="0 0 23 24"><circle cx="11.8" cy="7.6" r="7" fill="url(#softw)"/></svg>
<span class="t" style="left:597.22px;top:151.17px;font-size:7.6px;line-height:7.6px;color:#e8e8e8;transform:scaleX(0.8700);">30</span>
<div class="r" style="left:613.3px;top:135.6px;width:23px;height:24px;background:#515151;"></div>
<svg class="r" style="left:613.3px;top:135.6px;overflow:hidden" width="23" height="24" viewBox="0 0 23 24"><circle cx="11.8" cy="7.2" r="6.3" fill="#f8f8f8"/><circle cx="11.8" cy="7.2" r="6.8" fill="none" stroke="#f8f8f8" stroke-opacity=".4" stroke-width="1"/></svg>
<span class="t" style="left:619.38px;top:151.17px;font-size:7.6px;line-height:7.6px;color:#e8e8e8;transform:scaleX(0.8700);">123</span>
<div class="r" style="left:637.3px;top:135.6px;width:23px;height:24px;background:#515151;"></div>
<svg class="r" style="left:637.3px;top:135.6px;overflow:hidden" width="23" height="24" viewBox="0 0 23 24"><polygon points="14.9,7.2 14.3,8.7 12.6,8.8 10.8,8.7 10.6,7.2 11.0,5.9 12.6,5.1 14.1,6.0" fill="#f6f6f6"/></svg>
<span class="t" style="left:647.06px;top:151.17px;font-size:7.6px;line-height:7.6px;color:#e8e8e8;transform:scaleX(0.8700);">8</span>
<div class="r" style="left:661.3px;top:135.6px;width:23px;height:24px;background:#515151;"></div>
<svg class="r" style="left:661.3px;top:135.6px;overflow:hidden" width="23" height="24" viewBox="0 0 23 24"><ellipse cx="12" cy="7.4" rx="2.5" ry="2.9" fill="#f6f6f6"/></svg>
<span class="t" style="left:669.22px;top:151.17px;font-size:7.6px;line-height:7.6px;color:#e8e8e8;transform:scaleX(0.8700);">10</span>
<div class="r" style="left:685.3px;top:135.6px;width:23px;height:24px;background:#515151;"></div>
<svg class="r" style="left:685.3px;top:135.6px;overflow:hidden" width="23" height="24" viewBox="0 0 23 24"><polygon points="18.7,6.8 17.0,8.3 16.5,10.2 14.2,11.2 11.6,10.8 9.9,9.7 6.8,10.1 5.6,8.5 6.4,6.8 7.8,5.7 7.8,4.2 9.3,3.0 11.6,4.0 14.3,2.3 14.7,4.6 17.4,5.1" fill="#f6f6f6"/><circle cx="13.0" cy="8.0" r="0.49" fill="#f4f4f4" opacity="1"/><circle cx="12.8" cy="5.0" r="0.65" fill="#f4f4f4" opacity="1"/><circle cx="8.8" cy="4.5" r="0.63" fill="#f4f4f4" opacity="1"/><circle cx="13.0" cy="7.2" r="0.42" fill="#f4f4f4" opacity="1"/><circle cx="9.6" cy="3.9" r="0.49" fill="#f4f4f4" opacity="1"/><circle cx="7.3" cy="5.1" r="0.48" fill="#f4f4f4" opacity="1"/><circle cx="13.4" cy="2.6" r="0.45" fill="#f4f4f4" opacity="1"/><circle cx="6.7" cy="5.1" r="0.83" fill="#f4f4f4" opacity="1"/><circle cx="11.1" cy="4.3" r="0.89" fill="#f4f4f4" opacity="1"/><circle cx="15.1" cy="9.0" r="0.75" fill="#f4f4f4" opacity="1"/></svg>
<span class="t" style="left:693.22px;top:151.17px;font-size:7.6px;line-height:7.6px;color:#e8e8e8;transform:scaleX(0.8700);">25</span>
<div class="r" style="left:709.3px;top:135.6px;width:23px;height:24px;background:#515151;"></div>
<svg class="r" style="left:709.3px;top:135.6px;overflow:hidden" width="23" height="24" viewBox="0 0 23 24"><circle cx="14.3" cy="9.7" r="0.32" fill="#f4f4f4" opacity="1"/><circle cx="9.0" cy="3.3" r="0.64" fill="#f4f4f4" opacity="1"/><circle cx="14.1" cy="5.2" r="0.72" fill="#f4f4f4" opacity="1"/><circle cx="7.9" cy="5.0" r="0.57" fill="#f4f4f4" opacity="1"/><circle cx="15.2" cy="2.9" r="0.58" fill="#f4f4f4" opacity="1"/><circle cx="11.2" cy="6.2" r="0.72" fill="#f4f4f4" opacity="1"/><circle cx="7.8" cy="3.0" r="0.79" fill="#f4f4f4" opacity="1"/><circle cx="11.0" cy="9.8" r="0.70" fill="#f4f4f4" opacity="1"/><circle cx="15.9" cy="7.4" r="0.40" fill="#f4f4f4" opacity="1"/><circle cx="12.7" cy="7.6" r="0.76" fill="#f4f4f4" opacity="1"/><circle cx="13.8" cy="8.6" r="0.53" fill="#f4f4f4" opacity="1"/><circle cx="12.8" cy="6.2" r="0.57" fill="#f4f4f4" opacity="1"/><circle cx="6.0" cy="5.6" r="0.79" fill="#f4f4f4" opacity="1"/><circle cx="13.8" cy="5.2" r="0.55" fill="#f4f4f4" opacity="1"/><circle cx="7.9" cy="10.6" r="0.87" fill="#f4f4f4" opacity="1"/><circle cx="13.2" cy="8.4" r="0.44" fill="#f4f4f4" opacity="1"/><circle cx="12.2" cy="10.2" r="0.65" fill="#f4f4f4" opacity="1"/><circle cx="11.8" cy="7.2" r="0.55" fill="#f4f4f4" opacity="1"/><circle cx="8.6" cy="9.6" r="0.87" fill="#f4f4f4" opacity="1"/><circle cx="10.2" cy="3.9" r="0.67" fill="#f4f4f4" opacity="1"/><circle cx="11.3" cy="6.2" r="0.84" fill="#f4f4f4" opacity="1"/><circle cx="12.9" cy="2.5" r="0.78" fill="#f4f4f4" opacity="1"/><circle cx="8.8" cy="8.8" r="0.36" fill="#f4f4f4" opacity="1"/><circle cx="11.0" cy="6.3" r="0.34" fill="#f4f4f4" opacity="1"/><circle cx="12.4" cy="8.6" r="0.50" fill="#f4f4f4" opacity="1"/><circle cx="11.8" cy="7.0" r="0.39" fill="#f4f4f4" opacity="1"/><circle cx="14.7" cy="8.6" r="0.32" fill="#f4f4f4" opacity="1"/><circle cx="15.3" cy="4.4" r="0.39" fill="#f4f4f4" opacity="1"/><circle cx="11.8" cy="9.7" r="0.52" fill="#f4f4f4" opacity="1"/><circle cx="16.1" cy="10.2" r="0.90" fill="#f4f4f4" opacity="1"/><circle cx="7.6" cy="7.7" r="0.35" fill="#f4f4f4" opacity="1"/><circle cx="14.6" cy="8.6" r="0.46" fill="#f4f4f4" opacity="1"/><circle cx="12.9" cy="5.5" r="0.31" fill="#f4f4f4" opacity="1"/><circle cx="16.1" cy="6.0" r="0.39" fill="#f4f4f4" opacity="1"/><circle cx="11.1" cy="6.8" r="0.62" fill="#f4f4f4" opacity="1"/><circle cx="17.8" cy="6.4" r="0.72" fill="#f4f4f4" opacity="1"/><circle cx="11.5" cy="9.7" r="0.40" fill="#f4f4f4" opacity="1"/><circle cx="12.4" cy="3.6" r="0.77" fill="#f4f4f4" opacity="1"/><circle cx="10.5" cy="8.8" r="0.79" fill="#f4f4f4" opacity="1"/><circle cx="17.8" cy="6.6" r="0.78" fill="#f4f4f4" opacity="1"/><circle cx="14.1" cy="3.2" r="0.44" fill="#f4f4f4" opacity="1"/><circle cx="8.3" cy="6.7" r="0.32" fill="#f4f4f4" opacity="1"/><circle cx="14.8" cy="7.4" r="0.46" fill="#f4f4f4" opacity="1"/><circle cx="9.5" cy="2.4" r="0.57" fill="#f4f4f4" opacity="1"/><circle cx="17.8" cy="5.1" r="0.87" fill="#f4f4f4" opacity="1"/><circle cx="10.0" cy="8.5" r="0.44" fill="#f4f4f4" opacity="1"/></svg>
<span class="t" style="left:715.63px;top:151.17px;font-size:7.6px;line-height:7.6px;color:#e8e8e8;transform:scaleX(0.8700);">112</span>
<div class="r" style="left:733.3px;top:135.6px;width:23px;height:24px;background:#515151;"></div>
<svg class="r" style="left:733.3px;top:135.6px;overflow:hidden" width="23" height="24" viewBox="0 0 23 24"><circle cx="12.6" cy="9.7" r="0.71" fill="#f4f4f4" opacity="1"/><circle cx="16.3" cy="4.1" r="0.64" fill="#f4f4f4" opacity="1"/><circle cx="8.7" cy="3.0" r="0.44" fill="#f4f4f4" opacity="1"/><circle cx="8.7" cy="2.4" r="0.79" fill="#f4f4f4" opacity="1"/><circle cx="11.8" cy="3.4" r="0.49" fill="#f4f4f4" opacity="1"/><circle cx="12.6" cy="4.3" r="0.80" fill="#f4f4f4" opacity="1"/><circle cx="15.3" cy="6.8" r="0.60" fill="#f4f4f4" opacity="1"/><circle cx="16.6" cy="5.7" r="0.49" fill="#f4f4f4" opacity="1"/><circle cx="13.2" cy="8.8" r="0.85" fill="#f4f4f4" opacity="1"/><circle cx="12.5" cy="5.6" r="0.81" fill="#f4f4f4" opacity="1"/><circle cx="16.6" cy="6.8" r="0.58" fill="#f4f4f4" opacity="1"/><circle cx="10.1" cy="6.8" r="0.41" fill="#f4f4f4" opacity="1"/><circle cx="16.5" cy="6.5" r="0.66" fill="#f4f4f4" opacity="1"/><circle cx="15.2" cy="5.9" r="0.84" fill="#f4f4f4" opacity="1"/><circle cx="12.9" cy="5.2" r="0.53" fill="#f4f4f4" opacity="1"/><circle cx="11.1" cy="9.9" r="0.69" fill="#f4f4f4" opacity="1"/><circle cx="11.6" cy="11.1" r="0.47" fill="#f4f4f4" opacity="1"/><circle cx="14.6" cy="5.6" r="0.63" fill="#f4f4f4" opacity="1"/><circle cx="6.7" cy="4.5" r="0.61" fill="#f4f4f4" opacity="1"/><circle cx="15.4" cy="5.4" r="0.67" fill="#f4f4f4" opacity="1"/><circle cx="11.2" cy="7.3" r="0.62" fill="#f4f4f4" opacity="1"/><circle cx="11.9" cy="7.6" r="0.80" fill="#f4f4f4" opacity="1"/><circle cx="13.7" cy="10.9" r="0.76" fill="#f4f4f4" opacity="1"/><circle cx="8.8" cy="6.3" r="0.66" fill="#f4f4f4" opacity="1"/><circle cx="6.8" cy="5.6" r="0.45" fill="#f4f4f4" opacity="1"/><circle cx="9.3" cy="6.4" r="0.54" fill="#f4f4f4" opacity="1"/><circle cx="12.4" cy="3.3" r="0.68" fill="#f4f4f4" opacity="1"/><circle cx="12.2" cy="1.5" r="0.62" fill="#f4f4f4" opacity="1"/><circle cx="8.7" cy="4.7" r="0.66" fill="#f4f4f4" opacity="1"/><circle cx="10.4" cy="3.8" r="0.67" fill="#f4f4f4" opacity="1"/><circle cx="5.9" cy="8.2" r="0.75" fill="#f4f4f4" opacity="1"/><circle cx="16.1" cy="3.2" r="0.53" fill="#f4f4f4" opacity="1"/><circle cx="6.2" cy="5.2" r="0.82" fill="#f4f4f4" opacity="1"/><circle cx="12.9" cy="8.7" r="0.62" fill="#f4f4f4" opacity="1"/><circle cx="14.2" cy="8.6" r="0.44" fill="#f4f4f4" opacity="1"/><circle cx="9.2" cy="2.7" r="0.85" fill="#f4f4f4" opacity="1"/><circle cx="14.7" cy="11.6" r="0.73" fill="#f4f4f4" opacity="1"/><circle cx="15.4" cy="11.9" r="0.88" fill="#f4f4f4" opacity="1"/><circle cx="12.9" cy="13.3" r="0.60" fill="#f4f4f4" opacity="1"/><circle cx="5.7" cy="7.9" r="0.82" fill="#f4f4f4" opacity="1"/><circle cx="13.8" cy="10.6" r="0.66" fill="#f4f4f4" opacity="1"/><circle cx="10.6" cy="9.4" r="0.56" fill="#f4f4f4" opacity="1"/><circle cx="11.7" cy="6.8" r="0.68" fill="#f4f4f4" opacity="1"/><circle cx="11.3" cy="7.6" r="0.57" fill="#f4f4f4" opacity="1"/><circle cx="8.8" cy="4.5" r="0.43" fill="#f4f4f4" opacity="1"/><circle cx="17.2" cy="6.9" r="0.89" fill="#f4f4f4" opacity="1"/><circle cx="14.0" cy="9.1" r="0.42" fill="#f4f4f4" opacity="1"/><circle cx="12.3" cy="4.6" r="0.46" fill="#f4f4f4" opacity="1"/><circle cx="6.6" cy="10.2" r="0.81" fill="#f4f4f4" opacity="1"/><circle cx="11.7" cy="9.4" r="0.86" fill="#f4f4f4" opacity="1"/><circle cx="7.3" cy="5.3" r="0.44" fill="#f4f4f4" opacity="1"/><circle cx="16.4" cy="9.2" r="0.61" fill="#f4f4f4" opacity="1"/><circle cx="17.2" cy="10.0" r="0.72" fill="#f4f4f4" opacity="1"/><circle cx="12.2" cy="6.1" r="0.83" fill="#f4f4f4" opacity="1"/><circle cx="17.0" cy="9.7" r="0.63" fill="#f4f4f4" opacity="1"/><circle cx="9.5" cy="11.1" r="0.86" fill="#f4f4f4" opacity="1"/><circle cx="11.6" cy="9.2" r="0.66" fill="#f4f4f4" opacity="1"/><circle cx="11.9" cy="9.0" r="0.48" fill="#f4f4f4" opacity="1"/><circle cx="14.1" cy="8.1" r="0.56" fill="#f4f4f4" opacity="1"/><circle cx="10.0" cy="12.3" r="0.54" fill="#f4f4f4" opacity="1"/><circle cx="9.6" cy="7.4" r="0.57" fill="#f4f4f4" opacity="1"/><circle cx="14.5" cy="7.7" r="0.41" fill="#f4f4f4" opacity="1"/><circle cx="11.3" cy="3.1" r="0.49" fill="#f4f4f4" opacity="1"/><circle cx="5.9" cy="8.3" r="0.45" fill="#f4f4f4" opacity="1"/><circle cx="13.4" cy="4.0" r="0.65" fill="#f4f4f4" opacity="1"/><circle cx="13.6" cy="4.3" r="0.65" fill="#f4f4f4" opacity="1"/><circle cx="9.5" cy="1.7" r="0.57" fill="#f4f4f4" opacity="1"/><circle cx="14.3" cy="3.0" r="0.72" fill="#f4f4f4" opacity="1"/><circle cx="9.1" cy="9.3" r="0.43" fill="#f4f4f4" opacity="1"/><circle cx="12.7" cy="8.3" r="0.77" fill="#f4f4f4" opacity="1"/></svg>
<span class="t" style="left:741.22px;top:151.17px;font-size:7.6px;line-height:7.6px;color:#e8e8e8;transform:scaleX(0.8700);">60</span>
<div class="r" style="left:589.3px;top:160.6px;width:23px;height:22.8px;background:#515151;"></div>
<svg class="r" style="left:589.3px;top:160.6px;overflow:hidden" width="23" height="22.8" viewBox="0 0 23 22.8"><ellipse cx="11.4" cy="6.4" rx="9" ry="5.8" fill="#f4f4f4"/></svg>
<span class="t" style="left:597.22px;top:175.77px;font-size:7.6px;line-height:7.6px;color:#e8e8e8;transform:scaleX(0.8700);">50</span>
<div class="r" style="left:613.3px;top:160.6px;width:23px;height:22.8px;background:#515151;"></div>
<svg class="r" style="left:613.3px;top:160.6px;overflow:hidden" width="23" height="22.8" viewBox="0 0 23 22.8"><polygon points="17.9,6.8 17.4,9.5 15.6,11.7 12.8,12.0 10.4,12.0 8.0,11.1 6.0,9.4 5.3,6.8 6.0,4.2 7.9,2.3 10.2,0.8 12.9,1.1 15.5,2.1 16.4,4.6" fill="#f6f6f6"/></svg>
<span class="t" style="left:621.22px;top:175.77px;font-size:7.6px;line-height:7.6px;color:#e8e8e8;transform:scaleX(0.8700);">25</span>
<div class="r" style="left:637.3px;top:160.6px;width:23px;height:22.8px;background:#515151;"></div>
<svg class="r" style="left:637.3px;top:160.6px;overflow:hidden" width="23" height="22.8" viewBox="0 0 23 22.8"><circle cx="11.8" cy="7" r="6" fill="#e8e8e8" opacity=".9"/><circle cx="15.9" cy="6.3" r="0.52" fill="#f4f4f4" opacity="1"/><circle cx="14.7" cy="6.4" r="0.58" fill="#f4f4f4" opacity="1"/><circle cx="15.2" cy="7.0" r="0.64" fill="#f4f4f4" opacity="1"/><circle cx="9.5" cy="7.0" r="0.65" fill="#f4f4f4" opacity="1"/><circle cx="14.5" cy="7.1" r="0.44" fill="#f4f4f4" opacity="1"/><circle cx="11.1" cy="7.5" r="0.41" fill="#f4f4f4" opacity="1"/><circle cx="11.0" cy="9.4" r="0.69" fill="#f4f4f4" opacity="1"/><circle cx="6.8" cy="6.1" r="0.73" fill="#f4f4f4" opacity="1"/><circle cx="10.6" cy="1.6" r="0.59" fill="#f4f4f4" opacity="1"/><circle cx="9.1" cy="12.3" r="0.47" fill="#f4f4f4" opacity="1"/><circle cx="11.1" cy="2.5" r="0.42" fill="#f4f4f4" opacity="1"/><circle cx="14.7" cy="2.2" r="0.71" fill="#f4f4f4" opacity="1"/><circle cx="11.3" cy="1.7" r="0.47" fill="#f4f4f4" opacity="1"/><circle cx="7.9" cy="6.4" r="0.82" fill="#f4f4f4" opacity="1"/><circle cx="13.6" cy="2.0" r="0.69" fill="#f4f4f4" opacity="1"/><circle cx="15.5" cy="4.0" r="0.75" fill="#f4f4f4" opacity="1"/><circle cx="11.9" cy="7.7" r="0.47" fill="#f4f4f4" opacity="1"/><circle cx="10.8" cy="8.2" r="0.82" fill="#f4f4f4" opacity="1"/><circle cx="7.6" cy="5.4" r="0.71" fill="#f4f4f4" opacity="1"/><circle cx="10.2" cy="3.5" r="0.40" fill="#f4f4f4" opacity="1"/><circle cx="13.3" cy="2.2" r="0.65" fill="#f4f4f4" opacity="1"/><circle cx="7.2" cy="6.0" r="0.43" fill="#f4f4f4" opacity="1"/><circle cx="11.6" cy="4.4" r="0.44" fill="#f4f4f4" opacity="1"/><circle cx="11.3" cy="11.9" r="0.50" fill="#f4f4f4" opacity="1"/><circle cx="11.4" cy="1.1" r="0.65" fill="#f4f4f4" opacity="1"/><circle cx="8.9" cy="9.6" r="0.74" fill="#f4f4f4" opacity="1"/><circle cx="12.3" cy="2.5" r="0.72" fill="#f4f4f4" opacity="1"/><circle cx="13.5" cy="7.9" r="0.53" fill="#f4f4f4" opacity="1"/><circle cx="11.7" cy="4.1" r="0.68" fill="#f4f4f4" opacity="1"/><circle cx="12.9" cy="7.1" r="0.53" fill="#f4f4f4" opacity="1"/></svg>
<span class="t" style="left:645.22px;top:175.77px;font-size:7.6px;line-height:7.6px;color:#e8e8e8;transform:scaleX(0.8700);">30</span>
<div class="r" style="left:661.3px;top:160.6px;width:23px;height:22.8px;background:#515151;"></div>
<svg class="r" style="left:661.3px;top:160.6px;overflow:hidden" width="23" height="22.8" viewBox="0 0 23 22.8"><polygon points="17.4,7.0 17.0,8.0 16.1,8.9 15.4,10.3 12.9,10.2 10.7,10.3 8.6,9.9 5.7,9.7 7.4,7.8 4.2,7.0 7.8,6.2 8.4,5.5 7.6,3.2 10.7,3.7 12.7,4.4 14.0,5.0 16.8,4.8 18.6,5.7" fill="#ececec"/><circle cx="14.0" cy="11.3" r="0.43" fill="#f4f4f4" opacity="1"/><circle cx="9.4" cy="6.3" r="0.61" fill="#f4f4f4" opacity="1"/><circle cx="14.4" cy="6.6" r="0.79" fill="#f4f4f4" opacity="1"/><circle cx="3.4" cy="6.8" r="0.72" fill="#f4f4f4" opacity="1"/><circle cx="12.8" cy="11.3" r="0.59" fill="#f4f4f4" opacity="1"/><circle cx="12.1" cy="7.0" r="0.60" fill="#f4f4f4" opacity="1"/><circle cx="7.6" cy="7.7" r="0.38" fill="#f4f4f4" opacity="1"/><circle cx="9.3" cy="8.9" r="0.80" fill="#f4f4f4" opacity="1"/><circle cx="19.4" cy="7.0" r="0.80" fill="#f4f4f4" opacity="1"/><circle cx="18.1" cy="10.0" r="0.73" fill="#f4f4f4" opacity="1"/><circle cx="15.3" cy="5.7" r="0.52" fill="#f4f4f4" opacity="1"/><circle cx="4.8" cy="9.9" r="0.65" fill="#f4f4f4" opacity="1"/><circle cx="8.3" cy="9.1" r="0.47" fill="#f4f4f4" opacity="1"/><circle cx="14.0" cy="7.3" r="0.80" fill="#f4f4f4" opacity="1"/><circle cx="9.9" cy="11.3" r="0.45" fill="#f4f4f4" opacity="1"/><circle cx="11.2" cy="10.1" r="0.41" fill="#f4f4f4" opacity="1"/><circle cx="5.7" cy="10.2" r="0.83" fill="#f4f4f4" opacity="1"/><circle cx="14.4" cy="3.8" r="0.85" fill="#f4f4f4" opacity="1"/><circle cx="17.7" cy="5.8" r="0.73" fill="#f4f4f4" opacity="1"/><circle cx="18.9" cy="8.2" r="0.57" fill="#f4f4f4" opacity="1"/></svg>
<span class="t" style="left:669.22px;top:175.77px;font-size:7.6px;line-height:7.6px;color:#e8e8e8;transform:scaleX(0.8700);">50</span>
<div class="r" style="left:685.3px;top:160.6px;width:23px;height:22.8px;background:#515151;"></div>
<svg class="r" style="left:685.3px;top:160.6px;overflow:hidden" width="23" height="22.8" viewBox="0 0 23 22.8"><polygon points="17.0,7.0 17.1,8.0 17.3,9.4 15.9,10.7 12.6,9.3 10.4,11.1 8.6,9.9 6.5,9.3 5.1,8.3 6.5,7.0 7.8,6.2 6.2,4.5 9.0,4.4 10.6,3.3 12.9,3.9 15.2,3.9 17.7,4.4 19.1,5.6" fill="#ececec"/><circle cx="14.0" cy="11.2" r="0.60" fill="#f4f4f4" opacity="1"/><circle cx="13.4" cy="11.3" r="0.90" fill="#f4f4f4" opacity="1"/><circle cx="9.2" cy="7.4" r="0.42" fill="#f4f4f4" opacity="1"/><circle cx="15.8" cy="8.3" r="0.35" fill="#f4f4f4" opacity="1"/><circle cx="12.1" cy="9.0" r="0.64" fill="#f4f4f4" opacity="1"/><circle cx="17.5" cy="4.5" r="0.55" fill="#f4f4f4" opacity="1"/><circle cx="6.6" cy="8.6" r="0.53" fill="#f4f4f4" opacity="1"/><circle cx="10.9" cy="7.7" r="0.47" fill="#f4f4f4" opacity="1"/><circle cx="14.3" cy="6.7" r="0.60" fill="#f4f4f4" opacity="1"/><circle cx="6.1" cy="3.9" r="0.43" fill="#f4f4f4" opacity="1"/><circle cx="11.3" cy="9.0" r="0.54" fill="#f4f4f4" opacity="1"/><circle cx="3.6" cy="8.5" r="0.81" fill="#f4f4f4" opacity="1"/><circle cx="12.4" cy="6.7" r="0.32" fill="#f4f4f4" opacity="1"/><circle cx="9.7" cy="2.8" r="0.58" fill="#f4f4f4" opacity="1"/><circle cx="11.8" cy="7.0" r="0.53" fill="#f4f4f4" opacity="1"/><circle cx="19.0" cy="5.2" r="0.81" fill="#f4f4f4" opacity="1"/><circle cx="15.6" cy="6.7" r="0.37" fill="#f4f4f4" opacity="1"/><circle cx="15.2" cy="9.6" r="0.71" fill="#f4f4f4" opacity="1"/><circle cx="18.7" cy="5.6" r="0.69" fill="#f4f4f4" opacity="1"/><circle cx="12.3" cy="4.1" r="0.63" fill="#f4f4f4" opacity="1"/></svg>
<span class="t" style="left:693.22px;top:175.77px;font-size:7.6px;line-height:7.6px;color:#e8e8e8;transform:scaleX(0.8700);">60</span>
<div class="r" style="left:709.3px;top:160.6px;width:23px;height:22.8px;background:#515151;"></div>
<svg class="r" style="left:709.3px;top:160.6px;overflow:hidden" width="23" height="22.8" viewBox="0 0 23 22.8"><path d="M9.2 12.4V4.6C9.2 1.6 14.6 1.6 14.6 4.6V12.4Z" fill="#b4b4b4"/></svg>
<span class="t" style="left:715.38px;top:175.77px;font-size:7.6px;line-height:7.6px;color:#e8e8e8;transform:scaleX(0.8700);">100</span>
<div class="r" style="left:733.3px;top:160.6px;width:23px;height:22.8px;background:#515151;"></div>
<svg class="r" style="left:733.3px;top:160.6px;overflow:hidden" width="23" height="22.8" viewBox="0 0 23 22.8"><circle cx="18.5" cy="8.2" r="0.54" fill="#f4f4f4" opacity="1"/><circle cx="17.2" cy="4.9" r="0.58" fill="#f4f4f4" opacity="1"/><circle cx="14.2" cy="8.8" r="0.78" fill="#f4f4f4" opacity="1"/><circle cx="11.1" cy="5.6" r="0.44" fill="#f4f4f4" opacity="1"/><circle cx="6.1" cy="6.4" r="0.63" fill="#f4f4f4" opacity="1"/><circle cx="12.8" cy="11.1" r="0.41" fill="#f4f4f4" opacity="1"/><circle cx="10.2" cy="10.3" r="0.98" fill="#f4f4f4" opacity="1"/><circle cx="7.2" cy="2.9" r="0.69" fill="#f4f4f4" opacity="1"/><circle cx="12.1" cy="9.4" r="0.98" fill="#f4f4f4" opacity="1"/><circle cx="10.7" cy="4.4" r="0.41" fill="#f4f4f4" opacity="1"/><circle cx="5.5" cy="7.0" r="0.65" fill="#f4f4f4" opacity="1"/><circle cx="11.5" cy="11.4" r="0.96" fill="#f4f4f4" opacity="1"/><circle cx="12.0" cy="7.7" r="0.60" fill="#f4f4f4" opacity="1"/><circle cx="6.2" cy="9.1" r="0.52" fill="#f4f4f4" opacity="1"/><circle cx="13.7" cy="2.5" r="0.70" fill="#f4f4f4" opacity="1"/><circle cx="14.0" cy="12.3" r="0.59" fill="#f4f4f4" opacity="1"/><circle cx="13.2" cy="4.9" r="0.53" fill="#f4f4f4" opacity="1"/><circle cx="12.1" cy="4.3" r="0.97" fill="#f4f4f4" opacity="1"/><circle cx="8.9" cy="7.1" r="0.53" fill="#f4f4f4" opacity="1"/><circle cx="6.4" cy="9.2" r="0.97" fill="#f4f4f4" opacity="1"/><circle cx="14.6" cy="9.5" r="0.53" fill="#f4f4f4" opacity="1"/><circle cx="14.2" cy="6.7" r="0.43" fill="#f4f4f4" opacity="1"/><circle cx="16.0" cy="8.2" r="0.94" fill="#f4f4f4" opacity="1"/><circle cx="16.7" cy="3.9" r="1.00" fill="#f4f4f4" opacity="1"/><circle cx="15.5" cy="5.8" r="0.51" fill="#f4f4f4" opacity="1"/><circle cx="18.0" cy="5.2" r="0.42" fill="#f4f4f4" opacity="1"/><circle cx="9.5" cy="4.3" r="0.62" fill="#f4f4f4" opacity="1"/><circle cx="10.4" cy="8.7" r="0.40" fill="#f4f4f4" opacity="1"/><circle cx="11.0" cy="9.9" r="0.97" fill="#f4f4f4" opacity="1"/><circle cx="17.4" cy="10.8" r="0.52" fill="#f4f4f4" opacity="1"/><circle cx="7.4" cy="10.9" r="0.89" fill="#f4f4f4" opacity="1"/><circle cx="10.6" cy="7.4" r="0.68" fill="#f4f4f4" opacity="1"/><circle cx="6.5" cy="10.8" r="0.52" fill="#f4f4f4" opacity="1"/><circle cx="6.9" cy="11.0" r="0.42" fill="#f4f4f4" opacity="1"/><circle cx="5.8" cy="9.6" r="0.86" fill="#f4f4f4" opacity="1"/><circle cx="12.8" cy="7.2" r="0.44" fill="#f4f4f4" opacity="1"/><circle cx="14.9" cy="5.8" r="0.85" fill="#f4f4f4" opacity="1"/><circle cx="15.2" cy="5.3" r="0.56" fill="#f4f4f4" opacity="1"/><circle cx="17.6" cy="5.9" r="0.56" fill="#f4f4f4" opacity="1"/><circle cx="11.0" cy="4.3" r="0.57" fill="#f4f4f4" opacity="1"/><circle cx="18.6" cy="7.1" r="0.95" fill="#f4f4f4" opacity="1"/><circle cx="6.7" cy="3.0" r="0.41" fill="#f4f4f4" opacity="1"/><circle cx="12.3" cy="10.6" r="0.97" fill="#f4f4f4" opacity="1"/><circle cx="16.1" cy="6.1" r="0.55" fill="#f4f4f4" opacity="1"/><circle cx="7.1" cy="8.6" r="0.96" fill="#f4f4f4" opacity="1"/><circle cx="14.7" cy="11.5" r="0.84" fill="#f4f4f4" opacity="1"/><circle cx="14.8" cy="2.7" r="0.76" fill="#f4f4f4" opacity="1"/><circle cx="9.9" cy="9.5" r="0.62" fill="#f4f4f4" opacity="1"/><circle cx="12.2" cy="5.8" r="0.52" fill="#f4f4f4" opacity="1"/><circle cx="11.9" cy="4.6" r="0.44" fill="#f4f4f4" opacity="1"/></svg>
<span class="t" style="left:739.38px;top:175.77px;font-size:7.6px;line-height:7.6px;color:#e8e8e8;transform:scaleX(0.8700);">127</span>
<div class="r" style="left:589.3px;top:184.6px;width:23px;height:22.4px;background:#515151;"></div>
<svg class="r" style="left:589.3px;top:184.6px;overflow:hidden" width="23" height="22.4" viewBox="0 0 23 22.4"><circle cx="17.3" cy="8.3" r="0.43" fill="#f4f4f4" opacity="0.8"/><circle cx="19.2" cy="6.7" r="0.70" fill="#f4f4f4" opacity="0.8"/><circle cx="11.6" cy="8.8" r="0.34" fill="#f4f4f4" opacity="0.8"/><circle cx="5.3" cy="7.4" r="0.48" fill="#f4f4f4" opacity="0.8"/><circle cx="12.3" cy="10.9" r="0.55" fill="#f4f4f4" opacity="0.8"/><circle cx="8.7" cy="2.9" r="0.64" fill="#f4f4f4" opacity="0.8"/><circle cx="10.6" cy="5.9" r="0.64" fill="#f4f4f4" opacity="0.8"/><circle cx="10.3" cy="11.5" r="0.45" fill="#f4f4f4" opacity="0.8"/><circle cx="11.6" cy="5.1" r="0.40" fill="#f4f4f4" opacity="0.8"/><circle cx="11.9" cy="9.3" r="0.65" fill="#f4f4f4" opacity="0.8"/><circle cx="8.2" cy="6.0" r="0.46" fill="#f4f4f4" opacity="0.8"/><circle cx="17.1" cy="7.2" r="0.39" fill="#f4f4f4" opacity="0.8"/><circle cx="14.0" cy="3.1" r="0.70" fill="#f4f4f4" opacity="0.8"/><circle cx="15.9" cy="9.7" r="0.63" fill="#f4f4f4" opacity="0.8"/><circle cx="15.9" cy="2.6" r="0.32" fill="#f4f4f4" opacity="0.8"/><circle cx="11.2" cy="9.0" r="0.38" fill="#f4f4f4" opacity="0.8"/><circle cx="17.5" cy="6.7" r="0.67" fill="#f4f4f4" opacity="0.8"/><circle cx="6.7" cy="11.4" r="0.48" fill="#f4f4f4" opacity="0.8"/><circle cx="11.4" cy="12.6" r="0.68" fill="#f4f4f4" opacity="0.8"/><circle cx="16.4" cy="10.1" r="0.55" fill="#f4f4f4" opacity="0.8"/><circle cx="12.7" cy="10.6" r="0.36" fill="#f4f4f4" opacity="0.8"/><circle cx="12.8" cy="9.9" r="0.54" fill="#f4f4f4" opacity="0.8"/></svg>
<span class="t" style="left:595.38px;top:199.77px;font-size:7.6px;line-height:7.6px;color:#e8e8e8;transform:scaleX(0.8700);">284</span>
<div class="r" style="left:613.3px;top:184.6px;width:23px;height:22.4px;background:#515151;"></div>
<svg class="r" style="left:613.3px;top:184.6px;overflow:hidden" width="23" height="22.4" viewBox="0 0 23 22.4"><circle cx="9.9" cy="5.1" r="0.41" fill="#f4f4f4" opacity="1"/><circle cx="8.7" cy="11.2" r="0.49" fill="#f4f4f4" opacity="1"/><circle cx="10.6" cy="9.1" r="0.80" fill="#f4f4f4" opacity="1"/><circle cx="10.3" cy="6.7" r="0.45" fill="#f4f4f4" opacity="1"/><circle cx="7.2" cy="9.6" r="0.72" fill="#f4f4f4" opacity="1"/><circle cx="14.2" cy="8.1" r="0.75" fill="#f4f4f4" opacity="1"/><circle cx="8.5" cy="8.5" r="0.55" fill="#f4f4f4" opacity="1"/><circle cx="15.8" cy="6.1" r="0.68" fill="#f4f4f4" opacity="1"/><circle cx="8.7" cy="9.8" r="0.83" fill="#f4f4f4" opacity="1"/></svg>
<span class="t" style="left:621.22px;top:199.77px;font-size:7.6px;line-height:7.6px;color:#e8e8e8;transform:scaleX(0.8700);">80</span>
<div class="r" style="left:637.3px;top:184.6px;width:23px;height:22.4px;background:#515151;"></div>
<svg class="r" style="left:637.3px;top:184.6px;overflow:hidden" width="23" height="22.4" viewBox="0 0 23 22.4"><circle cx="16.5" cy="6.9" r="0.52" fill="#f4f4f4" opacity="1"/><circle cx="11.3" cy="5.2" r="0.40" fill="#f4f4f4" opacity="1"/><circle cx="16.0" cy="5.3" r="0.89" fill="#f4f4f4" opacity="1"/><circle cx="5.2" cy="9.5" r="0.68" fill="#f4f4f4" opacity="1"/><circle cx="12.2" cy="7.3" r="0.73" fill="#f4f4f4" opacity="1"/><circle cx="6.6" cy="3.5" r="0.45" fill="#f4f4f4" opacity="1"/><circle cx="8.4" cy="5.2" r="0.70" fill="#f4f4f4" opacity="1"/><circle cx="14.3" cy="8.8" r="0.71" fill="#f4f4f4" opacity="1"/><circle cx="13.8" cy="6.4" r="0.69" fill="#f4f4f4" opacity="1"/><circle cx="14.6" cy="2.6" r="0.52" fill="#f4f4f4" opacity="1"/><circle cx="17.6" cy="10.3" r="0.99" fill="#f4f4f4" opacity="1"/><circle cx="10.3" cy="7.1" r="0.96" fill="#f4f4f4" opacity="1"/><circle cx="5.6" cy="9.9" r="0.77" fill="#f4f4f4" opacity="1"/><circle cx="13.1" cy="5.6" r="0.87" fill="#f4f4f4" opacity="1"/><circle cx="12.7" cy="9.7" r="0.91" fill="#f4f4f4" opacity="1"/><circle cx="13.3" cy="5.5" r="0.53" fill="#f4f4f4" opacity="1"/><circle cx="7.1" cy="8.9" r="0.63" fill="#f4f4f4" opacity="1"/><circle cx="14.5" cy="8.4" r="0.83" fill="#f4f4f4" opacity="1"/><circle cx="12.8" cy="6.6" r="0.74" fill="#f4f4f4" opacity="1"/><circle cx="11.9" cy="6.3" r="0.90" fill="#f4f4f4" opacity="1"/><circle cx="16.5" cy="9.4" r="0.73" fill="#f4f4f4" opacity="1"/><circle cx="8.8" cy="5.3" r="0.65" fill="#f4f4f4" opacity="1"/><circle cx="7.3" cy="5.6" r="0.80" fill="#f4f4f4" opacity="1"/><circle cx="6.8" cy="8.0" r="0.41" fill="#f4f4f4" opacity="1"/><circle cx="7.7" cy="4.9" r="0.54" fill="#f4f4f4" opacity="1"/><circle cx="12.4" cy="2.9" r="0.67" fill="#f4f4f4" opacity="1"/><circle cx="14.2" cy="9.8" r="0.46" fill="#f4f4f4" opacity="1"/><circle cx="15.4" cy="9.1" r="0.46" fill="#f4f4f4" opacity="1"/><circle cx="6.4" cy="8.1" r="0.42" fill="#f4f4f4" opacity="1"/><circle cx="10.5" cy="6.2" r="0.84" fill="#f4f4f4" opacity="1"/><circle cx="12.8" cy="3.8" r="0.43" fill="#f4f4f4" opacity="1"/><circle cx="7.0" cy="6.9" r="0.97" fill="#f4f4f4" opacity="1"/><circle cx="16.9" cy="10.3" r="1.00" fill="#f4f4f4" opacity="1"/><circle cx="10.9" cy="2.8" r="0.52" fill="#f4f4f4" opacity="1"/><circle cx="17.4" cy="6.6" r="0.97" fill="#f4f4f4" opacity="1"/><circle cx="14.3" cy="6.2" r="0.87" fill="#f4f4f4" opacity="1"/><circle cx="13.3" cy="6.6" r="0.61" fill="#f4f4f4" opacity="1"/><circle cx="11.9" cy="5.4" r="0.94" fill="#f4f4f4" opacity="1"/><circle cx="10.6" cy="11.2" r="0.49" fill="#f4f4f4" opacity="1"/><circle cx="3.6" cy="6.9" r="0.52" fill="#f4f4f4" opacity="1"/><circle cx="11.3" cy="10.2" r="0.59" fill="#f4f4f4" opacity="1"/><circle cx="14.8" cy="7.4" r="0.50" fill="#f4f4f4" opacity="1"/><circle cx="18.1" cy="5.5" r="0.94" fill="#f4f4f4" opacity="1"/><circle cx="15.4" cy="10.6" r="0.47" fill="#f4f4f4" opacity="1"/><circle cx="5.4" cy="6.3" r="0.62" fill="#f4f4f4" opacity="1"/><circle cx="16.0" cy="4.6" r="0.75" fill="#f4f4f4" opacity="1"/><circle cx="13.4" cy="6.2" r="1.00" fill="#f4f4f4" opacity="1"/><circle cx="8.4" cy="5.0" r="0.88" fill="#f4f4f4" opacity="1"/><circle cx="11.0" cy="11.8" r="0.75" fill="#f4f4f4" opacity="1"/><circle cx="7.1" cy="10.1" r="0.67" fill="#f4f4f4" opacity="1"/><circle cx="15.0" cy="10.6" r="0.43" fill="#f4f4f4" opacity="1"/><circle cx="13.4" cy="5.1" r="0.78" fill="#f4f4f4" opacity="1"/><circle cx="18.0" cy="6.7" r="0.80" fill="#f4f4f4" opacity="1"/><circle cx="11.7" cy="7.1" r="0.42" fill="#f4f4f4" opacity="1"/><circle cx="15.6" cy="9.9" r="0.66" fill="#f4f4f4" opacity="1"/><circle cx="3.8" cy="6.6" r="0.48" fill="#f4f4f4" opacity="1"/><circle cx="12.7" cy="10.7" r="0.41" fill="#f4f4f4" opacity="1"/><circle cx="16.4" cy="7.0" r="0.46" fill="#f4f4f4" opacity="1"/><circle cx="9.6" cy="8.5" r="0.75" fill="#f4f4f4" opacity="1"/><circle cx="9.0" cy="6.0" r="0.77" fill="#f4f4f4" opacity="1"/><circle cx="9.2" cy="7.2" r="0.96" fill="#f4f4f4" opacity="1"/><circle cx="11.9" cy="8.5" r="0.46" fill="#f4f4f4" opacity="1"/><circle cx="6.7" cy="3.6" r="0.87" fill="#f4f4f4" opacity="1"/><circle cx="8.6" cy="8.2" r="0.41" fill="#f4f4f4" opacity="1"/><circle cx="8.1" cy="4.3" r="0.61" fill="#f4f4f4" opacity="1"/><circle cx="8.6" cy="4.7" r="0.96" fill="#f4f4f4" opacity="1"/><circle cx="11.4" cy="4.9" r="0.94" fill="#f4f4f4" opacity="1"/><circle cx="17.5" cy="7.9" r="0.64" fill="#f4f4f4" opacity="1"/><circle cx="11.9" cy="7.9" r="0.87" fill="#f4f4f4" opacity="1"/><circle cx="17.8" cy="7.3" r="0.96" fill="#f4f4f4" opacity="1"/></svg>
<span class="t" style="left:643.38px;top:199.77px;font-size:7.6px;line-height:7.6px;color:#e8e8e8;transform:scaleX(0.8700);">174</span>
<div class="r" style="left:661.3px;top:184.6px;width:23px;height:22.4px;background:#515151;"></div>
<svg class="r" style="left:661.3px;top:184.6px;overflow:hidden" width="23" height="22.4" viewBox="0 0 23 22.4"><circle cx="13.5" cy="8.6" r="0.48" fill="#8c8c8c" opacity="0.8"/><circle cx="6.4" cy="6.8" r="0.54" fill="#8c8c8c" opacity="0.8"/><circle cx="13.4" cy="9.4" r="0.39" fill="#8c8c8c" opacity="0.8"/><circle cx="18.0" cy="8.5" r="0.53" fill="#8c8c8c" opacity="0.8"/><circle cx="11.7" cy="6.7" r="0.55" fill="#8c8c8c" opacity="0.8"/><circle cx="11.7" cy="3.6" r="0.52" fill="#8c8c8c" opacity="0.8"/><circle cx="9.1" cy="7.7" r="0.33" fill="#8c8c8c" opacity="0.8"/><circle cx="11.9" cy="7.8" r="0.40" fill="#8c8c8c" opacity="0.8"/><circle cx="11.8" cy="2.7" r="0.55" fill="#8c8c8c" opacity="0.8"/><circle cx="11.0" cy="4.6" r="0.47" fill="#8c8c8c" opacity="0.8"/><circle cx="6.2" cy="8.8" r="0.46" fill="#8c8c8c" opacity="0.8"/><circle cx="11.3" cy="11.1" r="0.59" fill="#8c8c8c" opacity="0.8"/><circle cx="13.1" cy="11.9" r="0.30" fill="#8c8c8c" opacity="0.8"/><circle cx="11.6" cy="9.3" r="0.52" fill="#8c8c8c" opacity="0.8"/><circle cx="17.3" cy="5.5" r="0.40" fill="#8c8c8c" opacity="0.8"/><circle cx="14.4" cy="5.1" r="0.37" fill="#8c8c8c" opacity="0.8"/><circle cx="16.2" cy="4.8" r="0.51" fill="#8c8c8c" opacity="0.8"/><circle cx="8.3" cy="2.4" r="0.44" fill="#8c8c8c" opacity="0.8"/><circle cx="14.8" cy="3.3" r="0.56" fill="#8c8c8c" opacity="0.8"/><circle cx="6.5" cy="8.7" r="0.47" fill="#8c8c8c" opacity="0.8"/><circle cx="10.8" cy="9.0" r="0.49" fill="#8c8c8c" opacity="0.8"/><circle cx="17.6" cy="9.4" r="0.34" fill="#8c8c8c" opacity="0.8"/><circle cx="13.6" cy="7.2" r="0.58" fill="#8c8c8c" opacity="0.8"/><circle cx="10.6" cy="8.4" r="0.31" fill="#8c8c8c" opacity="0.8"/><circle cx="17.2" cy="8.1" r="0.49" fill="#8c8c8c" opacity="0.8"/><circle cx="9.9" cy="2.8" r="0.32" fill="#8c8c8c" opacity="0.8"/><circle cx="8.6" cy="5.4" r="0.55" fill="#8c8c8c" opacity="0.8"/><circle cx="14.6" cy="2.4" r="0.32" fill="#8c8c8c" opacity="0.8"/><circle cx="16.3" cy="3.2" r="0.58" fill="#8c8c8c" opacity="0.8"/><circle cx="13.9" cy="8.3" r="0.33" fill="#8c8c8c" opacity="0.8"/><circle cx="18.0" cy="8.0" r="0.54" fill="#8c8c8c" opacity="0.8"/><circle cx="7.7" cy="3.4" r="0.49" fill="#8c8c8c" opacity="0.8"/><circle cx="11.4" cy="8.3" r="0.33" fill="#8c8c8c" opacity="0.8"/><circle cx="11.9" cy="4.9" r="0.40" fill="#8c8c8c" opacity="0.8"/><circle cx="11.2" cy="7.2" r="0.38" fill="#8c8c8c" opacity="0.8"/><circle cx="10.6" cy="11.3" r="0.41" fill="#8c8c8c" opacity="0.8"/><circle cx="8.9" cy="11.8" r="0.45" fill="#8c8c8c" opacity="0.8"/><circle cx="14.9" cy="3.7" r="0.31" fill="#8c8c8c" opacity="0.8"/><circle cx="8.2" cy="8.7" r="0.53" fill="#8c8c8c" opacity="0.8"/><circle cx="8.6" cy="10.6" r="0.46" fill="#8c8c8c" opacity="0.8"/></svg>
<span class="t" style="left:667.38px;top:199.77px;font-size:7.6px;line-height:7.6px;color:#e8e8e8;transform:scaleX(0.8700);">175</span>
<div class="r" style="left:685.3px;top:184.6px;width:23px;height:22.4px;background:#515151;"></div>
<svg class="r" style="left:685.3px;top:184.6px;overflow:hidden" width="23" height="22.4" viewBox="0 0 23 22.4"><polygon points="15.9,7.0 13.3,8.3 13.6,11.4 11.0,9.7 8.5,11.2 6.2,9.7 6.1,7.0 8.4,5.5 9.8,5.1 11.0,1.6 13.0,3.7 14.4,5.1" fill="#f6f6f6"/><circle cx="12.1" cy="5.1" r="0.80" fill="#f4f4f4" opacity="1"/><circle cx="8.1" cy="11.1" r="0.66" fill="#f4f4f4" opacity="1"/><circle cx="14.2" cy="6.1" r="0.63" fill="#f4f4f4" opacity="1"/><circle cx="10.1" cy="3.5" r="0.57" fill="#f4f4f4" opacity="1"/><circle cx="10.5" cy="6.1" r="0.97" fill="#f4f4f4" opacity="1"/><circle cx="9.6" cy="2.4" r="0.88" fill="#f4f4f4" opacity="1"/><circle cx="9.1" cy="9.6" r="0.74" fill="#f4f4f4" opacity="1"/><circle cx="12.5" cy="6.2" r="1.03" fill="#f4f4f4" opacity="1"/><circle cx="13.9" cy="7.3" r="0.66" fill="#f4f4f4" opacity="1"/><circle cx="14.8" cy="4.8" r="0.73" fill="#f4f4f4" opacity="1"/><circle cx="13.4" cy="5.4" r="0.78" fill="#f4f4f4" opacity="1"/><circle cx="6.1" cy="6.1" r="0.95" fill="#f4f4f4" opacity="1"/><circle cx="9.3" cy="4.6" r="0.70" fill="#f4f4f4" opacity="1"/><circle cx="14.6" cy="11.2" r="0.90" fill="#f4f4f4" opacity="1"/><circle cx="11.3" cy="5.1" r="0.76" fill="#f4f4f4" opacity="1"/><circle cx="12.1" cy="3.0" r="0.58" fill="#f4f4f4" opacity="1"/></svg>
<span class="t" style="left:691.38px;top:199.77px;font-size:7.6px;line-height:7.6px;color:#e8e8e8;transform:scaleX(0.8700);">306</span>
<div class="r" style="left:709.3px;top:184.6px;width:23px;height:22.4px;background:#515151;"></div>
<svg class="r" style="left:709.3px;top:184.6px;overflow:hidden" width="23" height="22.4" viewBox="0 0 23 22.4"><circle cx="11.8" cy="7.2" r="6.2" fill="#fafafa"/><circle cx="11.8" cy="7.2" r="6.9" fill="none" stroke="#fff" stroke-opacity=".35" stroke-width="1"/></svg>
<span class="t" style="left:717.22px;top:199.77px;font-size:7.6px;line-height:7.6px;color:#e8e8e8;transform:scaleX(0.8700);">50</span>
<div class="r" style="left:733.3px;top:184.6px;width:23px;height:22.4px;background:#515151;"></div>
<svg class="r" style="left:733.3px;top:184.6px;overflow:hidden" width="23" height="22.4" viewBox="0 0 23 22.4"><circle cx="6.9" cy="8.2" r="0.37" fill="#b0b0b0" opacity="0.8"/><circle cx="12.7" cy="9.5" r="0.51" fill="#b0b0b0" opacity="0.8"/><circle cx="12.8" cy="5.5" r="0.35" fill="#b0b0b0" opacity="0.8"/><circle cx="11.8" cy="9.9" r="0.46" fill="#b0b0b0" opacity="0.8"/><circle cx="13.3" cy="9.4" r="0.36" fill="#b0b0b0" opacity="0.8"/><circle cx="16.2" cy="6.3" r="0.33" fill="#b0b0b0" opacity="0.8"/><circle cx="13.1" cy="6.7" r="0.42" fill="#b0b0b0" opacity="0.8"/><circle cx="16.5" cy="6.5" r="0.52" fill="#b0b0b0" opacity="0.8"/><circle cx="9.9" cy="7.8" r="0.49" fill="#b0b0b0" opacity="0.8"/><circle cx="13.4" cy="8.4" r="0.42" fill="#b0b0b0" opacity="0.8"/><circle cx="14.8" cy="7.7" r="0.54" fill="#b0b0b0" opacity="0.8"/><circle cx="10.6" cy="3.5" r="0.49" fill="#b0b0b0" opacity="0.8"/><circle cx="10.2" cy="7.4" r="0.48" fill="#b0b0b0" opacity="0.8"/><circle cx="8.1" cy="9.6" r="0.57" fill="#b0b0b0" opacity="0.8"/><circle cx="8.3" cy="8.7" r="0.52" fill="#b0b0b0" opacity="0.8"/><circle cx="9.8" cy="8.1" r="0.52" fill="#b0b0b0" opacity="0.8"/><circle cx="15.2" cy="3.7" r="0.51" fill="#b0b0b0" opacity="0.8"/><circle cx="14.4" cy="3.4" r="0.49" fill="#b0b0b0" opacity="0.8"/><circle cx="9.2" cy="7.8" r="0.49" fill="#b0b0b0" opacity="0.8"/><circle cx="14.4" cy="8.9" r="0.53" fill="#b0b0b0" opacity="0.8"/><circle cx="10.9" cy="2.9" r="0.38" fill="#b0b0b0" opacity="0.8"/><circle cx="8.8" cy="8.6" r="0.49" fill="#b0b0b0" opacity="0.8"/><circle cx="8.2" cy="9.4" r="0.58" fill="#b0b0b0" opacity="0.8"/><circle cx="13.5" cy="11.0" r="0.53" fill="#b0b0b0" opacity="0.8"/><circle cx="9.1" cy="9.3" r="0.59" fill="#b0b0b0" opacity="0.8"/><circle cx="15.4" cy="7.9" r="0.35" fill="#b0b0b0" opacity="0.8"/><circle cx="12.8" cy="1.7" r="0.46" fill="#b0b0b0" opacity="0.8"/><circle cx="14.9" cy="9.4" r="0.46" fill="#b0b0b0" opacity="0.8"/><circle cx="11.1" cy="3.3" r="0.49" fill="#b0b0b0" opacity="0.8"/><circle cx="13.5" cy="3.7" r="0.42" fill="#b0b0b0" opacity="0.8"/><circle cx="13.8" cy="6.3" r="0.51" fill="#b0b0b0" opacity="0.8"/><circle cx="8.2" cy="10.0" r="0.34" fill="#b0b0b0" opacity="0.8"/><circle cx="14.7" cy="6.7" r="0.32" fill="#b0b0b0" opacity="0.8"/><circle cx="11.3" cy="10.2" r="0.30" fill="#b0b0b0" opacity="0.8"/><circle cx="9.0" cy="8.6" r="0.51" fill="#b0b0b0" opacity="0.8"/><circle cx="10.3" cy="9.0" r="0.37" fill="#b0b0b0" opacity="0.8"/></svg>
<span class="t" style="left:741.22px;top:199.77px;font-size:7.6px;line-height:7.6px;color:#e8e8e8;transform:scaleX(0.8700);">16</span>
<div class="r" style="left:589.3px;top:208.2px;width:23px;height:6.8px;background:#515151;"></div>
<svg class="r" style="left:589.3px;top:208.2px;overflow:hidden" width="23" height="6.8" viewBox="0 0 23 6.8"><circle cx="11.4" cy="1.1" r="0.61" fill="#f4f4f4" opacity="1"/><circle cx="13.0" cy="6.6" r="0.56" fill="#f4f4f4" opacity="1"/><circle cx="12.3" cy="4.9" r="0.71" fill="#f4f4f4" opacity="1"/><circle cx="13.7" cy="1.9" r="0.59" fill="#f4f4f4" opacity="1"/><circle cx="9.1" cy="3.5" r="0.79" fill="#f4f4f4" opacity="1"/><circle cx="8.6" cy="5.8" r="0.73" fill="#f4f4f4" opacity="1"/><circle cx="13.6" cy="2.3" r="0.52" fill="#f4f4f4" opacity="1"/><circle cx="9.9" cy="3.7" r="0.73" fill="#f4f4f4" opacity="1"/><circle cx="7.9" cy="6.2" r="0.51" fill="#f4f4f4" opacity="1"/><circle cx="9.6" cy="4.9" r="0.57" fill="#f4f4f4" opacity="1"/><circle cx="11.9" cy="4.1" r="0.69" fill="#f4f4f4" opacity="1"/><circle cx="11.2" cy="5.3" r="0.52" fill="#f4f4f4" opacity="1"/><circle cx="7.6" cy="4.2" r="0.65" fill="#f4f4f4" opacity="1"/><circle cx="9.7" cy="2.6" r="0.77" fill="#f4f4f4" opacity="1"/><circle cx="12.6" cy="3.6" r="0.73" fill="#f4f4f4" opacity="1"/><circle cx="16.8" cy="2.6" r="0.46" fill="#f4f4f4" opacity="1"/><circle cx="14.4" cy="2.0" r="0.41" fill="#f4f4f4" opacity="1"/><circle cx="18.6" cy="4.2" r="0.66" fill="#f4f4f4" opacity="1"/><circle cx="11.8" cy="4.8" r="0.46" fill="#f4f4f4" opacity="1"/><circle cx="12.4" cy="6.6" r="0.54" fill="#f4f4f4" opacity="1"/><circle cx="15.6" cy="6.3" r="0.72" fill="#f4f4f4" opacity="1"/><circle cx="15.0" cy="6.4" r="0.64" fill="#f4f4f4" opacity="1"/><circle cx="12.9" cy="1.7" r="0.76" fill="#f4f4f4" opacity="1"/><circle cx="13.3" cy="1.4" r="0.48" fill="#f4f4f4" opacity="1"/><circle cx="10.1" cy="2.1" r="0.70" fill="#f4f4f4" opacity="1"/><circle cx="5.8" cy="5.0" r="0.62" fill="#f4f4f4" opacity="1"/></svg>
<div class="r" style="left:613.3px;top:208.2px;width:23px;height:6.8px;background:#515151;"></div>
<svg class="r" style="left:613.3px;top:208.2px;overflow:hidden" width="23" height="6.8" viewBox="0 0 23 6.8"><circle cx="11.6" cy="5.1" r="0.36" fill="#f4f4f4" opacity="0.8"/><circle cx="10.7" cy="4.0" r="0.49" fill="#f4f4f4" opacity="0.8"/><circle cx="14.2" cy="5.3" r="0.50" fill="#f4f4f4" opacity="0.8"/><circle cx="6.5" cy="3.4" r="0.30" fill="#f4f4f4" opacity="0.8"/><circle cx="13.9" cy="2.6" r="0.53" fill="#f4f4f4" opacity="0.8"/><circle cx="9.1" cy="2.0" r="0.45" fill="#f4f4f4" opacity="0.8"/><circle cx="6.7" cy="5.2" r="0.33" fill="#f4f4f4" opacity="0.8"/><circle cx="8.8" cy="2.5" r="0.31" fill="#f4f4f4" opacity="0.8"/><circle cx="8.1" cy="2.7" r="0.67" fill="#f4f4f4" opacity="0.8"/><circle cx="8.9" cy="6.2" r="0.50" fill="#f4f4f4" opacity="0.8"/><circle cx="6.2" cy="4.2" r="0.31" fill="#f4f4f4" opacity="0.8"/><circle cx="10.9" cy="2.1" r="0.44" fill="#f4f4f4" opacity="0.8"/><circle cx="13.9" cy="2.9" r="0.49" fill="#f4f4f4" opacity="0.8"/><circle cx="6.7" cy="3.6" r="0.38" fill="#f4f4f4" opacity="0.8"/><circle cx="8.5" cy="4.6" r="0.52" fill="#f4f4f4" opacity="0.8"/><circle cx="13.1" cy="2.9" r="0.63" fill="#f4f4f4" opacity="0.8"/><circle cx="8.5" cy="5.0" r="0.41" fill="#f4f4f4" opacity="0.8"/><circle cx="5.9" cy="3.9" r="0.56" fill="#f4f4f4" opacity="0.8"/><circle cx="12.6" cy="2.7" r="0.43" fill="#f4f4f4" opacity="0.8"/><circle cx="10.5" cy="5.8" r="0.55" fill="#f4f4f4" opacity="0.8"/></svg>
<div class="r" style="left:637.3px;top:208.2px;width:23px;height:6.8px;background:#515151;"></div>
<svg class="r" style="left:637.3px;top:208.2px;overflow:hidden" width="23" height="6.8" viewBox="0 0 23 6.8"><circle cx="12.0" cy="3.6" r="0.76" fill="#f4f4f4" opacity="1"/><circle cx="14.4" cy="2.6" r="0.42" fill="#f4f4f4" opacity="1"/><circle cx="11.7" cy="4.1" r="0.49" fill="#f4f4f4" opacity="1"/><circle cx="15.1" cy="2.9" r="0.73" fill="#f4f4f4" opacity="1"/><circle cx="12.9" cy="1.3" r="0.71" fill="#f4f4f4" opacity="1"/><circle cx="9.0" cy="2.5" r="0.75" fill="#f4f4f4" opacity="1"/><circle cx="8.5" cy="2.6" r="0.51" fill="#f4f4f4" opacity="1"/><circle cx="10.2" cy="2.4" r="0.78" fill="#f4f4f4" opacity="1"/><circle cx="13.2" cy="4.6" r="0.42" fill="#f4f4f4" opacity="1"/><circle cx="12.5" cy="1.2" r="0.73" fill="#f4f4f4" opacity="1"/><circle cx="8.8" cy="6.0" r="0.79" fill="#f4f4f4" opacity="1"/><circle cx="9.7" cy="3.5" r="0.55" fill="#f4f4f4" opacity="1"/><circle cx="9.6" cy="4.7" r="0.62" fill="#f4f4f4" opacity="1"/><circle cx="8.8" cy="1.8" r="0.43" fill="#f4f4f4" opacity="1"/></svg>
<div class="r" style="left:661.3px;top:208.2px;width:23px;height:6.8px;background:#515151;"></div>
<svg class="r" style="left:661.3px;top:208.2px;overflow:hidden" width="23" height="6.8" viewBox="0 0 23 6.8"><circle cx="13.5" cy="3.8" r="0.36" fill="#f4f4f4" opacity="1"/><circle cx="15.1" cy="2.0" r="0.76" fill="#f4f4f4" opacity="1"/><circle cx="13.7" cy="4.1" r="0.49" fill="#f4f4f4" opacity="1"/><circle cx="10.8" cy="2.4" r="0.79" fill="#f4f4f4" opacity="1"/><circle cx="11.7" cy="4.3" r="0.35" fill="#f4f4f4" opacity="1"/><circle cx="13.0" cy="3.1" r="0.38" fill="#f4f4f4" opacity="1"/><circle cx="14.2" cy="4.0" r="0.64" fill="#f4f4f4" opacity="1"/><circle cx="16.8" cy="6.0" r="0.34" fill="#f4f4f4" opacity="1"/><circle cx="14.8" cy="3.4" r="0.31" fill="#f4f4f4" opacity="1"/><circle cx="13.7" cy="2.7" r="0.67" fill="#f4f4f4" opacity="1"/><circle cx="14.3" cy="4.5" r="0.69" fill="#f4f4f4" opacity="1"/><circle cx="13.2" cy="1.3" r="0.66" fill="#f4f4f4" opacity="1"/></svg>
<div class="r" style="left:685.3px;top:208.2px;width:23px;height:6.8px;background:#515151;"></div>
<svg class="r" style="left:685.3px;top:208.2px;overflow:hidden" width="23" height="6.8" viewBox="0 0 23 6.8"><circle cx="15.2" cy="5.1" r="0.51" fill="#f4f4f4" opacity="1"/><circle cx="2.6" cy="4.7" r="0.38" fill="#f4f4f4" opacity="1"/><circle cx="16.4" cy="3.5" r="0.30" fill="#f4f4f4" opacity="1"/><circle cx="16.2" cy="4.2" r="0.55" fill="#f4f4f4" opacity="1"/></svg>
<div class="r" style="left:709.3px;top:208.2px;width:23px;height:6.8px;background:#515151;"></div>
<svg class="r" style="left:709.3px;top:208.2px;overflow:hidden" width="23" height="6.8" viewBox="0 0 23 6.8"><circle cx="13.6" cy="5.5" r="0.45" fill="#aaa" opacity="1"/><circle cx="13.8" cy="6.6" r="0.40" fill="#aaa" opacity="1"/></svg>
<div class="r" style="left:733.3px;top:208.2px;width:23px;height:6.8px;background:#515151;"></div>
<svg class="r" style="left:733.3px;top:208.2px;overflow:hidden" width="23" height="6.8" viewBox="0 0 23 6.8"><ellipse cx="11.8" cy="7" rx="6" ry="4.6" fill="url(#softw)"/></svg>
<div class="r" style="left:588.6999999999999px;top:135.2px;width:24.6px;height:24.6px;background:transparent;border:2px solid #1fb0ee;"></div>
<div class="r" style="left:762px;top:135px;width:10px;height:80px;background:#4f4f4f;"></div>
<div class="r" style="left:762px;top:148.3px;width:9.4px;height:34.8px;background:#6c6c6c;"></div>
<svg class="r" style="left:763.6px;top:141.6px;" width="6" height="3" viewBox="0 0 6 3"><path d="M0 3L3 0L6 3" fill="none" stroke="#a8a8a8" stroke-width="1"/></svg>
<svg class="r" style="left:763.6px;top:204.6px;" width="6" height="3" viewBox="0 0 6 3"><path d="M0 0L3 3L6 0" fill="none" stroke="#a8a8a8" stroke-width="1"/></svg>
<!-- brush tip controls -->
<span class="t" style="left:588.40px;top:222.56px;font-size:9.5px;line-height:9.5px;color:#d6d6d6;transform:scaleX(0.8225);">Size</span>
<div class="r" style="left:701.3px;top:221.1px;width:42.80000000000005px;height:12.50000000000001px;background:#464646;border:1px solid #5e5e5e;border-radius:2px;"></div>
<span class="t" style="left:705.00px;top:222.66px;font-size:9.5px;line-height:9.5px;color:#e2e2e2;transform:scaleX(0.7923);">455 px</span>
<div class="r" style="left:589.7px;top:241.2px;width:152.29999999999995px;height:2.4px;background:#6c6c6c;border-radius:1px;"></div>
<svg class="r" style="left:718.5px;top:243.39999999999998px;" width="9" height="7.8" viewBox="0 0 8.4 7.4"><path d="M4.2 0.2L7.6 3.6C8.2 4.2 8.3 4.6 8.3 5.2V6.2C8.3 7 7.9 7.3 7.2 7.3H1.2C0.5 7.3 0.1 7 0.1 6.2V5.2C0.1 4.6 0.2 4.2 0.8 3.6Z" fill="#f4f4f4"/></svg>
<div class="r" style="left:587.2px;top:257.8px;width:8px;height:8px;background:#4b4b4b;border:1px solid #767676;border-radius:1.6px;"></div>
<span class="t" style="left:597.80px;top:256.96px;font-size:9.5px;line-height:9.5px;color:#d6d6d6;transform:scaleX(0.7824);">Flip X</span>
<div class="r" style="left:624.2px;top:257.8px;width:8px;height:8px;background:#4b4b4b;border:1px solid #767676;border-radius:1.6px;"></div>
<span class="t" style="left:635.30px;top:256.96px;font-size:9.5px;line-height:9.5px;color:#d6d6d6;transform:scaleX(0.7589);">Flip Y</span>
<span class="t" style="left:607.20px;top:279.16px;font-size:9.5px;line-height:9.5px;color:#d6d6d6;transform:scaleX(0.7796);">Angle:</span>
<div class="r" style="left:633.4px;top:277.1px;width:38.90000000000007px;height:12.999999999999954px;background:#464646;border:1px solid #5e5e5e;border-radius:2px;"></div>
<span class="t" style="left:637.00px;top:278.91px;font-size:9.5px;line-height:9.5px;color:#e2e2e2;transform:scaleX(0.7707);">0°</span>
<span class="t" style="left:588.70px;top:298.76px;font-size:9.5px;line-height:9.5px;color:#d6d6d6;transform:scaleX(0.7791);">Roundness:</span>
<div class="r" style="left:633.4px;top:297.1px;width:38.90000000000007px;height:12.399999999999988px;background:#464646;border:1px solid #5e5e5e;border-radius:2px;"></div>
<span class="t" style="left:637.00px;top:298.61px;font-size:9.5px;line-height:9.5px;color:#e2e2e2;transform:scaleX(0.7820);">100%</span>
<div class="r" style="left:685.6px;top:254.2px;width:57.4px;height:56.8px;background:#535353;border:1px solid #8a8a8a;"></div>
<svg class="r" style="left:686px;top:254.7px;" width="57" height="56" viewBox="0 0 57 56"><circle cx="28.4" cy="28.3" r="19" fill="none" stroke="#8c8c8c" stroke-width="1.1"/><path d="M9.4 28.3H47.4M28.4 9.3V47.3" stroke="#8c8c8c" stroke-width="1"/><circle cx="28.4" cy="9" r="2.4" fill="#f4f4f4"/><circle cx="28.4" cy="47.6" r="2.4" fill="#f4f4f4"/><path d="M49.6 26L53.6 28.3L49.6 30.6Z" fill="#f0f0f0"/></svg>
<span class="t" style="left:588.60px;top:317.76px;font-size:9.5px;line-height:9.5px;color:#d6d6d6;transform:scaleX(0.7821);">Hardness</span>
<div class="r" style="left:704.8px;top:316.5px;width:39.00000000000009px;height:12.099999999999977px;background:#464646;border:1px solid #5e5e5e;border-radius:2px;"></div>
<span class="t" style="left:708.60px;top:317.86px;font-size:9.5px;line-height:9.5px;color:#e2e2e2;transform:scaleX(0.7137);">0%</span>
<div class="r" style="left:589.7px;top:333.8px;width:152.29999999999995px;height:2.4px;background:#6c6c6c;border-radius:1px;"></div>
<svg class="r" style="left:584.2px;top:336.0px;" width="9" height="7.8" viewBox="0 0 8.4 7.4"><path d="M4.2 0.2L7.6 3.6C8.2 4.2 8.3 4.6 8.3 5.2V6.2C8.3 7 7.9 7.3 7.2 7.3H1.2C0.5 7.3 0.1 7 0.1 6.2V5.2C0.1 4.6 0.2 4.2 0.8 3.6Z" fill="#f4f4f4"/></svg>
<div class="r" style="left:587.3000000000001px;top:350.3px;width:7.8px;height:7.8px;background:#e6e6e6;border-radius:1.6px;"></div>
<svg class="r" style="left:587.3000000000001px;top:350.3px;" width="7.8" height="7.8" viewBox="0 0 7.8 7.8"><path d="M1.6 3.9L3.2 5.6L6.1 2" fill="none" stroke="#3c3c3c" stroke-width="1.3"/></svg>
<span class="t" style="left:598.20px;top:349.56px;font-size:9.5px;line-height:9.5px;color:#d6d6d6;transform:scaleX(0.7923);">Spacing</span>
<div class="r" style="left:704.8px;top:347.3px;width:39.00000000000009px;height:12.299999999999965px;background:#464646;border:1px solid #5e5e5e;border-radius:2px;"></div>
<span class="t" style="left:708.60px;top:348.76px;font-size:9.5px;line-height:9.5px;color:#e2e2e2;transform:scaleX(0.7679);">25%</span>
<div class="r" style="left:589.7px;top:365.3px;width:152.29999999999995px;height:2.4px;background:#6c6c6c;border-radius:1px;"></div>
<svg class="r" style="left:602.1px;top:367.5px;" width="9" height="7.8" viewBox="0 0 8.4 7.4"><path d="M4.2 0.2L7.6 3.6C8.2 4.2 8.3 4.6 8.3 5.2V6.2C8.3 7 7.9 7.3 7.2 7.3H1.2C0.5 7.3 0.1 7 0.1 6.2V5.2C0.1 4.6 0.2 4.2 0.8 3.6Z" fill="#f4f4f4"/></svg>
<div class="r" style="left:496.6px;top:404.6px;width:264px;height:76px;background:#3f3f3f;"></div>
<svg class="r" style="left:497.4px;top:405.4px;overflow:hidden" width="262.4" height="74.4" viewBox="0 0 262.4 74.4">
<defs><filter id="pvblur" filterUnits="userSpaceOnUse" x="-40" y="-40" width="342" height="154"><feGaussianBlur stdDeviation="5.6"/></filter><filter id="pvblur2" filterUnits="userSpaceOnUse" x="-40" y="-40" width="342" height="154"><feGaussianBlur stdDeviation="3"/></filter>
<linearGradient id="pvbg" x1="0" x2="0" y1="0" y2="1"><stop offset="0" stop-color="#727272"/><stop offset="1" stop-color="#6c6c6c"/></linearGradient></defs>
<rect width="262.4" height="74.4" fill="url(#pvbg)"/>
<path d="M28 38C46 28 62 25 80 26C120 28 140 49 178 49C200 49 216 42 232 38" fill="none" stroke="#ffffff" stroke-width="31" stroke-linecap="round" filter="url(#pvblur)"/>
<path d="M28 38C46 28 62 25 80 26C120 28 140 49 178 49C200 49 216 42 232 38" fill="none" stroke="#ffffff" stroke-width="22" stroke-linecap="round" filter="url(#pvblur2)"/>
</svg>
<div class="r" style="left:478px;top:483px;width:301px;height:1px;background:#434343;"></div>
<svg class="r" style="left:749px;top:489px;" width="9" height="9" viewBox="0 0 9 9"><rect x="0.6" y="0.6" width="7.8" height="7.8" fill="none" stroke="#d4d4d4" stroke-width="1.1"/><path d="M4.5 2.6V6.4M2.6 4.5H6.4" stroke="#d4d4d4" stroke-width="1.1"/></svg>
<div class="r" style="left:478px;top:503.6px;width:301px;height:1px;background:#3c3c3c;"></div>
<div class="r" style="left:478px;top:504.6px;width:301px;height:4.6px;background:#4f4f4f;"></div>
<svg class="r" style="left:621px;top:505.6px;" width="14" height="3" viewBox="0 0 14 3"><path d="M0 1.5H14" stroke="#3e3e3e" stroke-width="2.4" stroke-dasharray="1 1.2"/></svg>
<svg class="r" style="left:769.6px;top:73px;" width="6.4" height="3.4" viewBox="0 0 6.4 3.4"><path d="M0 3.4L3.2 0L6.4 3.4" fill="none" stroke="#8e8e8e" stroke-width="1"/></svg>
<svg class="r" style="left:769.6px;top:523.6px;" width="6.4" height="3.4" viewBox="0 0 6.4 3.4"><path d="M0 0L3.2 3.4L6.4 0" fill="none" stroke="#8e8e8e" stroke-width="1"/></svg>
<!-- collapsed panel icon column -->
<svg class="r" style="left:787px;top:56px;" width="14.4" height="3" viewBox="0 0 14.4 3"><path d="M0 1.5H14.4" stroke="#444" stroke-width="2.6" stroke-dasharray="1.5 1.4"/></svg>
<svg class="r" style="left:788.5px;top:64px;" width="13" height="12" viewBox="0 0 13 12"><rect x="0.6" y="0.4" width="3" height="2.8" fill="none" stroke="#dcdcdc" stroke-width="0.9"/><rect x="0.6" y="4.4" width="3" height="2.8" fill="none" stroke="#dcdcdc" stroke-width="0.9"/><rect x="0.2" y="8.4" width="3.8" height="3.4" fill="#dcdcdc"/><path d="M7 2.6C11.6 2 12.6 8.6 8 11" fill="none" stroke="#dcdcdc" stroke-width="1.3"/><path d="M5.4 2.8L8.2 0.4V5Z" fill="#dcdcdc"/></svg>
<svg class="r" style="left:789px;top:86.6px;" width="11" height="10" viewBox="0 0 11 10"><path d="M0.4 3.6H2.2V0.6H4.2V3.6H6.6V0.6H8.6V3.6H10.6V9.6H0.4Z" fill="#dcdcdc"/></svg>
<div class="r" style="left:780px;top:104px;width:28.2px;height:1px;background:#3e3e3e;"></div>
<svg class="r" style="left:787px;top:107px;" width="14.4" height="3" viewBox="0 0 14.4 3"><path d="M0 1.5H14.4" stroke="#444" stroke-width="2.6" stroke-dasharray="1.5 1.4"/></svg>
<div class="r" style="left:783.6px;top:112.6px;width:21.6px;height:18.6px;background:#2e2e2e;border-radius:2px;"></div>
<svg class="r" style="left:787.4px;top:115px;" width="14" height="14" viewBox="0 0 14 14"><path d="M0.4 1H3M0.4 3.2H3M0.4 5.4H3M0.4 7.6H2.2" stroke="#e8e8e8" stroke-width="0.9" stroke-dasharray="0.9 0.7"/><path d="M13.4 1.2C14 1.8 13.7 2.6 13.1 3.3L8.6 8.4L6.8 6.8L11.6 1.8C12.2 1.2 12.9 0.8 13.4 1.2ZM6.1 7.4L8 9.1C8 10.6 6.8 11.9 2.6 12C4.1 10.8 3.9 8.4 6.1 7.4Z" fill="#f0f0f0"/></svg>
<svg class="r" style="left:788.6px;top:137.4px;" width="12" height="12" viewBox="0 0 12 12"><path d="M0 1.6H7.6M0 5.6H12M0 10H12" stroke="#dcdcdc" stroke-width="1.4"/><path d="M8.4 0.2L11.8 1.6L8.4 3.2Z" fill="#dcdcdc"/><circle cx="9" cy="10" r="2" fill="#dcdcdc"/><rect x="6" y="4.2" width="2" height="2.8" fill="#dcdcdc"/></svg>
<div class="r" style="left:780px;top:157.6px;width:28.2px;height:1px;background:#3e3e3e;"></div>
<svg class="r" style="left:787px;top:160px;" width="14.4" height="3" viewBox="0 0 14.4 3"><path d="M0 1.5H14.4" stroke="#444" stroke-width="2.6" stroke-dasharray="1.5 1.4"/></svg>
<svg class="r" style="left:788.6px;top:167px;" width="12" height="12" viewBox="0 0 12 12"><rect x="0.6" y="0.6" width="10.8" height="10.8" fill="none" stroke="#dcdcdc" stroke-width="1.2"/><path d="M5.4 0.6H9V6.4L7.2 5L5.4 6.4Z" fill="#dcdcdc"/></svg>
<svg class="r" style="left:788.6px;top:189.4px;" width="12" height="11" viewBox="0 0 12 11"><path d="M0 1.6H12M0 5.5H12M0 9.4H12" stroke="#dcdcdc" stroke-width="1"/><circle cx="8.4" cy="1.6" r="1.5" fill="#535353" stroke="#dcdcdc" stroke-width="0.9"/><circle cx="3.8" cy="5.5" r="1.5" fill="#535353" stroke="#dcdcdc" stroke-width="0.9"/><circle cx="7.4" cy="9.4" r="1.5" fill="#535353" stroke="#dcdcdc" stroke-width="0.9"/></svg>
<svg class="r" style="left:788.8px;top:211px;" width="12" height="12" viewBox="0 0 12 12"><circle cx="6" cy="6" r="5.3" fill="none" stroke="#dcdcdc" stroke-width="1.2"/><path d="M2.2 9.8A5.3 5.3 0 0 0 9.8 2.2Z" fill="#dcdcdc"/></svg>
<div class="r" style="left:780px;top:230px;width:28.2px;height:1px;background:#3e3e3e;"></div>
<svg class="r" style="left:787px;top:233px;" width="14.4" height="3" viewBox="0 0 14.4 3"><path d="M0 1.5H14.4" stroke="#444" stroke-width="2.6" stroke-dasharray="1.5 1.4"/></svg>
<svg class="r" style="left:788.4px;top:239.4px;" width="13" height="13" viewBox="0 0 13 13"><circle cx="6.5" cy="4.6" r="3.9" fill="#cfcfcf" fill-opacity=".75"/><circle cx="4.3" cy="8.3" r="3.9" fill="#cfcfcf" fill-opacity=".75"/><circle cx="8.7" cy="8.3" r="3.9" fill="#cfcfcf" fill-opacity=".75"/></svg>
<div class="r" style="left:780px;top:258px;width:28.2px;height:1px;background:#3e3e3e;"></div>
<svg class="r" style="left:787px;top:261.6px;" width="14.4" height="3" viewBox="0 0 14.4 3"><path d="M0 1.5H14.4" stroke="#444" stroke-width="2.6" stroke-dasharray="1.5 1.4"/></svg>
<svg class="r" style="left:786.8px;top:270px;" width="16" height="13" viewBox="0 0 16 13"><path d="M3.6 10.6C3.6 5.8 5.6 2.4 8 2.4C10.4 2.4 12.4 5.8 12.4 10.6" fill="none" stroke="#dcdcdc" stroke-width="1"/><path d="M1 2.4H15" stroke="#dcdcdc" stroke-width="0.9"/><rect x="6.6" y="1" width="2.8" height="2.8" fill="#dcdcdc"/><circle cx="1.2" cy="2.4" r="1.1" fill="#dcdcdc"/><circle cx="14.8" cy="2.4" r="1.1" fill="#dcdcdc"/><circle cx="3.6" cy="11" r="1.4" fill="#535353" stroke="#dcdcdc" stroke-width="0.9"/><circle cx="12.4" cy="11" r="1.4" fill="#535353" stroke="#dcdcdc" stroke-width="0.9"/></svg>
<div class="r" style="left:780px;top:290.6px;width:28.2px;height:1px;background:#3e3e3e;"></div>
<!-- swatches panel -->
<div class="r" style="left:810px;top:53px;width:214px;height:21px;background:#424242;"></div>
<div class="r" style="left:810px;top:53px;width:31.700000000000045px;height:20.6px;background:#4a4a4a;"></div>
<span class="t" style="left:817.00px;top:57.36px;font-size:9.5px;line-height:9.5px;color:#b2b2b2;transform:scaleX(0.7418);font-weight:700;">Color</span>
<div class="r" style="left:842.7px;top:53px;width:44.799999999999955px;height:21.6px;background:#535353;"></div>
<span class="t" style="left:849.20px;top:57.36px;font-size:9.5px;line-height:9.5px;color:#f4f4f4;transform:scaleX(0.7484);font-weight:700;">Swatches</span>
<div class="r" style="left:887.5px;top:53px;width:46.10000000000002px;height:20.6px;background:#4a4a4a;"></div>
<span class="t" style="left:894.00px;top:57.36px;font-size:9.5px;line-height:9.5px;color:#b2b2b2;transform:scaleX(0.7667);font-weight:700;">Gradients</span>
<div class="r" style="left:934.6px;top:53px;width:41.19999999999993px;height:20.6px;background:#4a4a4a;"></div>
<span class="t" style="left:941.80px;top:57.36px;font-size:9.5px;line-height:9.5px;color:#b2b2b2;transform:scaleX(0.7602);font-weight:700;">Patterns</span>
<svg class="r" style="left:1012.6px;top:60.6px;" width="7.4" height="6" viewBox="0 0 7.4 6"><path d="M0 0.7H7.4M0 3H7.4M0 5.3H7.4" stroke="#c4c4c4" stroke-width="1.2"/></svg>
<svg class="r" style="left:816px;top:85.4px;" width="8.4" height="8.4" viewBox="0 0 8.4 8.4"><circle cx="3.3" cy="3.3" r="2.6" fill="none" stroke="#ececec" stroke-width="1.4"/><path d="M5.2 5.2L7.9 7.9" stroke="#ececec" stroke-width="1.6"/></svg>
<div class="r" style="left:827.4px;top:81.4px;width:193.6px;height:15.8px;background:#4a4a4a;border:1px solid #646464;border-radius:1px;"></div>
<span class="t" style="left:831.00px;top:83.69px;font-size:11px;line-height:11px;color:#949494;transform:scaleX(0.8224);">Search Swatches</span>
<div class="r" style="left:816px;top:105px;width:12px;height:12px;background:#848484;"></div>
<div class="r" style="left:829px;top:105px;width:13px;height:12px;background:#0c327a;"></div>
<div class="r" style="left:843px;top:105px;width:12px;height:12px;background:#ffffff;"></div>
<div class="r" style="left:856px;top:105px;width:13px;height:12px;background:#0a2e98;"></div>
<div class="r" style="left:870px;top:105px;width:12px;height:12px;background:#e48ef4;"></div>
<div class="r" style="left:883px;top:105px;width:13px;height:12px;background:#4a46b6;"></div>
<div class="r" style="left:897px;top:105px;width:13px;height:12px;background:#1a10a0;"></div>
<div class="r" style="left:911px;top:105px;width:12px;height:12px;background:#fa6a6a;"></div>
<div class="r" style="left:924px;top:105px;width:13px;height:12px;background:#c8464c;"></div>
<div class="r" style="left:938px;top:105px;width:12px;height:12px;background:#2a1414;"></div>
<div class="r" style="left:951px;top:105px;width:13px;height:12px;background:#1e30c0;"></div>
<div class="r" style="left:965px;top:105px;width:12px;height:12px;background:#4c64e2;"></div>
<div class="r" style="left:978px;top:105px;width:13px;height:12px;background:#e8e04a;"></div>
<div class="r" style="left:992px;top:105px;width:12px;height:12px;background:#3e4aba;"></div>
<div class="r" style="left:1005px;top:105px;width:13px;height:12px;background:#4a6cf8;"></div>
<div class="r" style="left:810px;top:122.6px;width:204px;height:15px;background:#4a4a4a;"></div>
<svg class="r" style="left:815.6px;top:125.4px;" width="7" height="4" viewBox="0 0 7 4"><path d="M0.3 0.3L3.5 3.6L6.7 0.3" fill="none" stroke="#c2c2c2" stroke-width="1"/></svg>
<svg class="r" style="left:826.6px;top:123.6px;" width="10.4" height="8.4" viewBox="0 0 10.4 8.4"><path d="M0 0.8C0 0.3 0.3 0 0.8 0H3.8L4.8 1.2H9.6C10.1 1.2 10.4 1.5 10.4 2V7.6C10.4 8.1 10.1 8.4 9.6 8.4H0.8C0.3 8.4 0 8.1 0 7.6Z" fill="#d8d8d8"/><path d="M0 2.4H10.4" stroke="#4b4b4b" stroke-width="0.6"/></svg>
<span class="t" style="left:844.40px;top:122.71px;font-size:10.5px;line-height:10.5px;color:#e0e0e0;transform:scaleX(0.8484);">Grayscale</span>
<div class="r" style="left:810px;top:137.6px;width:204px;height:69px;background:#4f4f4f;"></div>
<div class="r" style="left:827px;top:140px;width:21px;height:21px;background:#ffffff;"></div>
<div class="r" style="left:849px;top:140px;width:22px;height:21px;background:#ededed;"></div>
<div class="r" style="left:872px;top:140px;width:21px;height:21px;background:#e6e6e6;"></div>
<div class="r" style="left:894px;top:140px;width:22px;height:21px;background:#dedede;"></div>
<div class="r" style="left:917px;top:140px;width:21px;height:21px;background:#d6d6d6;"></div>
<div class="r" style="left:939px;top:140px;width:22px;height:21px;background:#cdcdcd;"></div>
<div class="r" style="left:962px;top:140px;width:21px;height:21px;background:#c4c4c4;"></div>
<div class="r" style="left:984px;top:140px;width:22px;height:21px;background:#b9b9b9;"></div>
<div class="r" style="left:827px;top:162px;width:21px;height:21px;background:#a3a3a3;"></div>
<div class="r" style="left:849px;top:162px;width:22px;height:21px;background:#9a9a9a;"></div>
<div class="r" style="left:872px;top:162px;width:21px;height:21px;background:#909090;"></div>
<div class="r" style="left:894px;top:162px;width:22px;height:21px;background:#858585;"></div>
<div class="r" style="left:917px;top:162px;width:21px;height:21px;background:#7a7a7a;"></div>
<div class="r" style="left:939px;top:162px;width:22px;height:21px;background:#717171;"></div>
<div class="r" style="left:962px;top:162px;width:21px;height:21px;background:#676767;"></div>
<div class="r" style="left:984px;top:162px;width:22px;height:21px;background:#5c5c5c;"></div>
<div class="r" style="left:827px;top:184px;width:21px;height:21px;background:#505050;"></div>
<div class="r" style="left:849px;top:184px;width:22px;height:21px;background:#373737;"></div>
<div class="r" style="left:872px;top:184px;width:21px;height:21px;background:#1f1f1f;"></div>
<div class="r" style="left:894px;top:184px;width:22px;height:21px;background:#000000;"></div>
<div class="r" style="left:893px;top:161px;width:24px;height:23px;background:transparent;border:2px solid #22b2ee;"></div>
<div class="r" style="left:810px;top:206.6px;width:204px;height:29.4px;background:#4a4a4a;"></div>
<svg class="r" style="left:817px;top:213.6px;" width="4" height="7" viewBox="0 0 4 7"><path d="M0.3 0.3L3.6 3.5L0.3 6.7" fill="none" stroke="#c2c2c2" stroke-width="1"/></svg>
<svg class="r" style="left:826.6px;top:213.2px;" width="10.4" height="8.4" viewBox="0 0 10.4 8.4"><path d="M0 0.8C0 0.3 0.3 0 0.8 0H3.8L4.8 1.2H9.6C10.1 1.2 10.4 1.5 10.4 2V7.6C10.4 8.1 10.1 8.4 9.6 8.4H0.8C0.3 8.4 0 8.1 0 7.6Z" fill="#d8d8d8"/><path d="M0 2.4H10.4" stroke="#4b4b4b" stroke-width="0.6"/></svg>
<span class="t" style="left:844.40px;top:212.11px;font-size:10.5px;line-height:10.5px;color:#e0e0e0;transform:scaleX(0.8567);">Pastel</span>
<div class="r" style="left:826.6px;top:234.4px;width:5px;height:1.2px;background:#a8a8a8;"></div>
<div class="r" style="left:856.6px;top:234.6px;width:1.2px;height:1px;background:#9a9a9a;"></div>
<div class="r" style="left:810px;top:236.4px;width:214px;height:19px;background:#535353;"></div>
<div class="r" style="left:810px;top:236px;width:214px;height:1px;background:#444;"></div>
<div class="r" style="left:1014px;top:122.6px;width:10px;height:113.6px;background:#4f4f4f;"></div>
<div class="r" style="left:1014.4px;top:153.8px;width:8.6px;height:36px;background:#6c6c6c;"></div>
<svg class="r" style="left:1015.8px;top:130.4px;" width="6" height="3" viewBox="0 0 6 3"><path d="M0 3L3 0L6 3" fill="none" stroke="#a8a8a8" stroke-width="1"/></svg>
<svg class="r" style="left:1015.8px;top:226.6px;" width="6" height="3" viewBox="0 0 6 3"><path d="M0 0L3 3L6 0" fill="none" stroke="#a8a8a8" stroke-width="1"/></svg>
<svg class="r" style="left:951px;top:241.2px;" width="10.4" height="8.4" viewBox="0 0 10.4 8.4"><path d="M0 0.8C0 0.3 0.3 0 0.8 0H3.8L4.8 1.2H9.6C10.1 1.2 10.4 1.5 10.4 2V7.6C10.4 8.1 10.1 8.4 9.6 8.4H0.8C0.3 8.4 0 8.1 0 7.6Z" fill="#dadada"/><path d="M0 2.4H10.4" stroke="#4b4b4b" stroke-width="0.6"/></svg>
<svg class="r" style="left:973.6px;top:241px;" width="9" height="9" viewBox="0 0 9 9"><rect x="0.6" y="0.6" width="7.8" height="7.8" fill="none" stroke="#dadada" stroke-width="1.1"/><path d="M4.5 2.4V6.6M2.4 4.5H6.6" stroke="#dadada" stroke-width="1.1"/></svg>
<svg class="r" style="left:994.4px;top:240.4px;" width="8.4" height="10" viewBox="0 0 8.4 10"><path d="M0 1.8H8.4M3 0.6H5.4" stroke="#dadada" stroke-width="1.1"/><path d="M1 2.6L1.5 9.4H6.9L7.4 2.6" fill="none" stroke="#dadada" stroke-width="1"/><path d="M3.2 3.8V8M5.2 3.8V8" stroke="#dadada" stroke-width="0.8"/></svg>
<div class="r" style="left:810px;top:255.4px;width:214px;height:2.2px;background:#3a3a3a;"></div>
<!-- layers panel -->
<div class="r" style="left:810px;top:257.6px;width:214px;height:20.8px;background:#424242;"></div>
<div class="r" style="left:810px;top:257.6px;width:35.6px;height:21.4px;background:#535353;"></div>
<span class="t" style="left:817.00px;top:261.96px;font-size:9.5px;line-height:9.5px;color:#f4f4f4;transform:scaleX(0.7247);font-weight:700;">Layers</span>
<svg class="r" style="left:1012.6px;top:265px;" width="7.4" height="6" viewBox="0 0 7.4 6"><path d="M0 0.7H7.4M0 3H7.4M0 5.3H7.4" stroke="#c4c4c4" stroke-width="1.2"/></svg>
<div class="r" style="left:813px;top:284.4px;width:65px;height:15.2px;background:#4c4c4c;border:1px solid #5c5c5c;border-radius:2px;"></div>
<svg class="r" style="left:819px;top:288.6px;" width="7.6" height="7.6" viewBox="0 0 7.6 7.6"><circle cx="3" cy="3" r="2.4" fill="none" stroke="#c8c8c8" stroke-width="1.1"/><path d="M4.8 4.8L7.2 7.2" stroke="#c8c8c8" stroke-width="1.2"/></svg>
<span class="t" style="left:830.00px;top:287.36px;font-size:9.5px;line-height:9.5px;color:#8f8f8f;transform:scaleX(0.7468);">Kind</span>
<svg class="r" style="left:870.4px;top:291px;" width="5" height="2.6" viewBox="0 0 5 2.6"><path d="M0 0L2.5 2.6L5 0" fill="none" stroke="#6e6e6e" stroke-width="1"/></svg>
<svg class="r" style="left:886.6px;top:288.6px;" width="9.6" height="7.4" viewBox="0 0 9.6 7.4"><rect x="0.5" y="0.5" width="8.6" height="6.4" fill="none" stroke="#cdcdcd" stroke-width="1"/><path d="M1.6 5.6L3.4 3.4L4.8 4.8L6 3.8L7.8 5.6Z" fill="#cdcdcd"/></svg>
<svg class="r" style="left:905px;top:288.2px;" width="8" height="8" viewBox="0 0 8 8"><circle cx="4" cy="4" r="3.4" fill="none" stroke="#cdcdcd" stroke-width="1"/><path d="M1.6 6.4A3.4 3.4 0 0 0 6.4 1.6Z" fill="#cdcdcd"/></svg>
<span class="t" style="left:923.6px;top:286.4px;font:700 10.5px/11px 'Liberation Serif',serif;color:#d4d4d4;">T</span>
<svg class="r" style="left:941.4px;top:288.2px;" width="8.4" height="8.4" viewBox="0 0 8.4 8.4"><rect x="1.2" y="1.2" width="6" height="6" fill="none" stroke="#cdcdcd" stroke-width="1"/><rect x="0" y="0" width="2.2" height="2.2" fill="#cdcdcd"/><rect x="6.2" y="0" width="2.2" height="2.2" fill="#cdcdcd"/><rect x="0" y="6.2" width="2.2" height="2.2" fill="#cdcdcd"/><rect x="6.2" y="6.2" width="2.2" height="2.2" fill="#cdcdcd"/></svg>
<svg class="r" style="left:959.6px;top:287.6px;" width="8" height="9.4" viewBox="0 0 8 9.4"><path d="M0.5 2.4V9H5.6V2.4Z" fill="#b4b4b4"/><path d="M2.4 0.5H6L7.6 2.2V7H2.4Z" fill="#535353" stroke="#cdcdcd" stroke-width="0.9"/></svg>
<div class="r" style="left:977.6px;top:285.4px;width:6px;height:11.6px;background:#5f5f5f;border-radius:3px;"></div>
<div class="r" style="left:977.4px;top:284.6px;width:6.4px;height:6.4px;background:#8a8a8a;border-radius:50%;"></div>
<div class="r" style="left:813px;top:305.6px;width:96.4px;height:14.8px;background:#4c4c4c;border:1px solid #5c5c5c;border-radius:2px;"></div>
<span class="t" style="left:819.50px;top:308.56px;font-size:9.5px;line-height:9.5px;color:#8f8f8f;transform:scaleX(0.7610);">Normal</span>
<svg class="r" style="left:901.6px;top:312px;" width="5" height="2.6" viewBox="0 0 5 2.6"><path d="M0 0L2.5 2.6L5 0" fill="none" stroke="#707070" stroke-width="1"/></svg>
<span class="t" style="left:914.50px;top:308.56px;font-size:9.5px;line-height:9.5px;color:#8f8f8f;transform:scaleX(0.7720);">Opacity:</span>
<div class="r" style="left:944.9px;top:306.6px;width:27px;height:13.0px;background:#474747;border:1px solid #5a5a5a;border-radius:2px 0 0 2px;"></div>
<div class="r" style="left:971.6px;top:306.6px;width:11.4px;height:13.0px;background:#4c4c4c;border:1px solid #5a5a5a;border-radius:0 2px 2px 0;"></div>
<span class="t" style="left:948.40px;top:308.56px;font-size:9.5px;line-height:9.5px;color:#7c7c7c;transform:scaleX(0.7902);">100%</span>
<svg class="r" style="left:974.8px;top:312.1px;" width="5" height="2.6" viewBox="0 0 5 2.6"><path d="M0 0L2.5 2.6L5 0" fill="none" stroke="#707070" stroke-width="1"/></svg>
<div class="r" style="left:810px;top:322.6px;width:214px;height:1px;background:#474747;"></div>
<span class="t" style="left:814.70px;top:329.16px;font-size:9.5px;line-height:9.5px;color:#8f8f8f;transform:scaleX(0.7443);">Lock:</span>
<svg class="r" style="left:839.6px;top:330px;" width="8.4" height="8.4" viewBox="0 0 8.4 8.4"><rect x="0.4" y="0.4" width="7.6" height="7.6" fill="none" stroke="#c8c8c8" stroke-width="0.8"/><path d="M0.4 0.4H3V3H0.4ZM5.4 0.4H8V3H5.4ZM3 3H5.4V5.4H3ZM0.4 5.4H3V8H0.4ZM5.4 5.4H8V8H5.4Z" fill="#c8c8c8"/></svg>
<svg class="r" style="left:855.6px;top:329.4px;" width="10" height="10" viewBox="0 0 10 10"><path d="M9.4 0.4C9.9 0.9 9.6 1.5 9.2 2L5.8 6L4.4 4.8L8 0.8C8.5 0.3 9 0 9.4 0.4ZM3.9 5.3L5.3 6.6C5.3 7.8 4.4 8.8 1 9C2.2 8 2.1 6.1 3.9 5.3Z" fill="#c8c8c8"/></svg>
<svg class="r" style="left:871.6px;top:329.4px;" width="9.6" height="9.6" viewBox="0 0 9.6 9.6"><path d="M4.8 1V8.6M1 4.8H8.6" stroke="#c8c8c8" stroke-width="1"/><path d="M4.8 0L6.4 1.9H3.2ZM4.8 9.6L3.2 7.7H6.4ZM0 4.8L1.9 3.2V6.4ZM9.6 4.8L7.7 6.4V3.2Z" fill="#c8c8c8"/></svg>
<svg class="r" style="left:888px;top:329.4px;" width="10.4" height="10" viewBox="0 0 10.4 10"><path d="M2.4 0V7.6H10.4M0 2.4H8V10" fill="none" stroke="#c8c8c8" stroke-width="1"/><path d="M7 0.6L9.8 0.6V3.2" fill="none" stroke="#c8c8c8" stroke-width="0.8" stroke-dasharray="1 0.8"/></svg>
<svg class="r" style="left:906px;top:329.4px;" width="7.6" height="9.6" viewBox="0 0 7.6 9.6"><rect x="0" y="4" width="7.6" height="5.6" fill="#c8c8c8"/><path d="M1.6 4V2.6C1.6 0.2 6 0.2 6 2.6V4" fill="none" stroke="#c8c8c8" stroke-width="1.1"/><rect x="3.2" y="5.8" width="1.2" height="2" fill="#535353"/></svg>
<span class="t" style="left:931.00px;top:329.16px;font-size:9.5px;line-height:9.5px;color:#8f8f8f;transform:scaleX(0.7039);">Fill:</span>
<div class="r" style="left:944.9px;top:327.6px;width:27px;height:12.799999999999955px;background:#474747;border:1px solid #5a5a5a;border-radius:2px 0 0 2px;"></div>
<div class="r" style="left:971.6px;top:327.6px;width:11.4px;height:12.799999999999955px;background:#4c4c4c;border:1px solid #5a5a5a;border-radius:0 2px 2px 0;"></div>
<span class="t" style="left:948.40px;top:329.16px;font-size:9.5px;line-height:9.5px;color:#7c7c7c;transform:scaleX(0.7902);">100%</span>
<svg class="r" style="left:974.8px;top:333.0px;" width="5" height="2.6" viewBox="0 0 5 2.6"><path d="M0 0L2.5 2.6L5 0" fill="none" stroke="#707070" stroke-width="1"/></svg>
<div class="r" style="left:810px;top:345.4px;width:214px;height:181px;background:#4e4e4e;"></div>
<div class="r" style="left:833px;top:345.6px;width:179px;height:30.4px;background:#6d6d6d;"></div>
<svg class="r" style="left:815.6px;top:357px;" width="11" height="8" viewBox="0 0 11 8"><path d="M0.3 4C2.6 -0.6 8.4 -0.6 10.7 4C8.4 8.6 2.6 8.6 0.3 4Z" fill="#f2f2f2"/><circle cx="5.5" cy="4" r="2.1" fill="#535353"/><circle cx="5.5" cy="4" r="1" fill="#f2f2f2"/></svg>
<div class="r" style="left:836px;top:348.6px;width:18.8px;height:24.2px;background:#ffffff;border:1px solid #2e2e2e;"></div>
<div class="r" style="left:843.8px;top:359.6px;width:3px;height:3px;background:#9a9a9a;border-radius:50%;box-shadow:0 0 1.5px 0.6px #c4c4c4;"></div>
<span class="t" style="left:861.90px;top:356.36px;font-size:9.5px;line-height:9.5px;color:#f0f0f0;transform:scaleX(0.8027);font-style:italic;">Background</span>
<svg class="r" style="left:992px;top:355.6px;" width="8" height="10" viewBox="0 0 8 10"><rect x="0.6" y="4.2" width="6.8" height="5.2" fill="none" stroke="#ececec" stroke-width="1.1"/><path d="M2.1 4.2V2.8C2.1 0.4 5.9 0.4 5.9 2.8V4.2" fill="none" stroke="#ececec" stroke-width="1.1"/><rect x="3.4" y="6" width="1.2" height="1.9" fill="#ececec"/></svg>
<div class="r" style="left:810px;top:526.2px;width:214px;height:1px;background:#444;"></div>
<div class="r" style="left:810px;top:527.2px;width:214px;height:6px;background:#535353;"></div>
<svg class="r" style="left:894px;top:531.4px;" width="110" height="4" viewBox="0 0 110 4"><path d="M2 3L4 0.4" stroke="#c8c8c8" stroke-width="1"/><rect x="20.6" y="0.4" width="9" height="4" fill="#e4e4e4"/><path d="M42.6 3C42.6 -0.6 48 -0.6 48 3" fill="none" stroke="#c8c8c8" stroke-width="1"/><path d="M60.6 1H66" stroke="#c8c8c8" stroke-width="1"/><rect x="82" y="0.8" width="8.4" height="4" fill="none" stroke="#c8c8c8" stroke-width="1"/><circle cx="104.6" cy="2.6" r="1" fill="#c8c8c8"/></svg>
<!-- annotation arrows -->
<svg class="r" style="left:0;top:0;pointer-events:none" width="1024" height="533" viewBox="0 0 1024 533"><polygon points="306.7,136.5 484.5,137.4 480.7,133.5 492.6,140.1 480.5,146.3 484.4,142.6 306.7,137.5" fill="#d90a0a" stroke="#d90a0a" stroke-width="0.9" stroke-linejoin="round"/><polygon points="619.0,142.2 883.4,161.3 879.9,157.1 891.4,164.0 879.0,169.0 883.1,165.5 619.0,143.2" fill="#d90a0a" stroke="#d90a0a" stroke-width="0.9" stroke-linejoin="round"/><polygon points="601.1,164.0 603.1,393.0 606.8,389.2 600.6,401.0 594.4,389.2 598.1,393.0 599.7,164.0" fill="#d90a0a" stroke="#d90a0a" stroke-width="0.9" stroke-linejoin="round"/><polygon points="488.5,449.4 371.1,379.8 372.6,385.0 365.4,373.0 379.3,374.1 374.0,375.0 489.1,448.6" fill="#d90a0a" stroke="#d90a0a" stroke-width="0.9" stroke-linejoin="round"/></svg>
</div>
</body>
</html>
